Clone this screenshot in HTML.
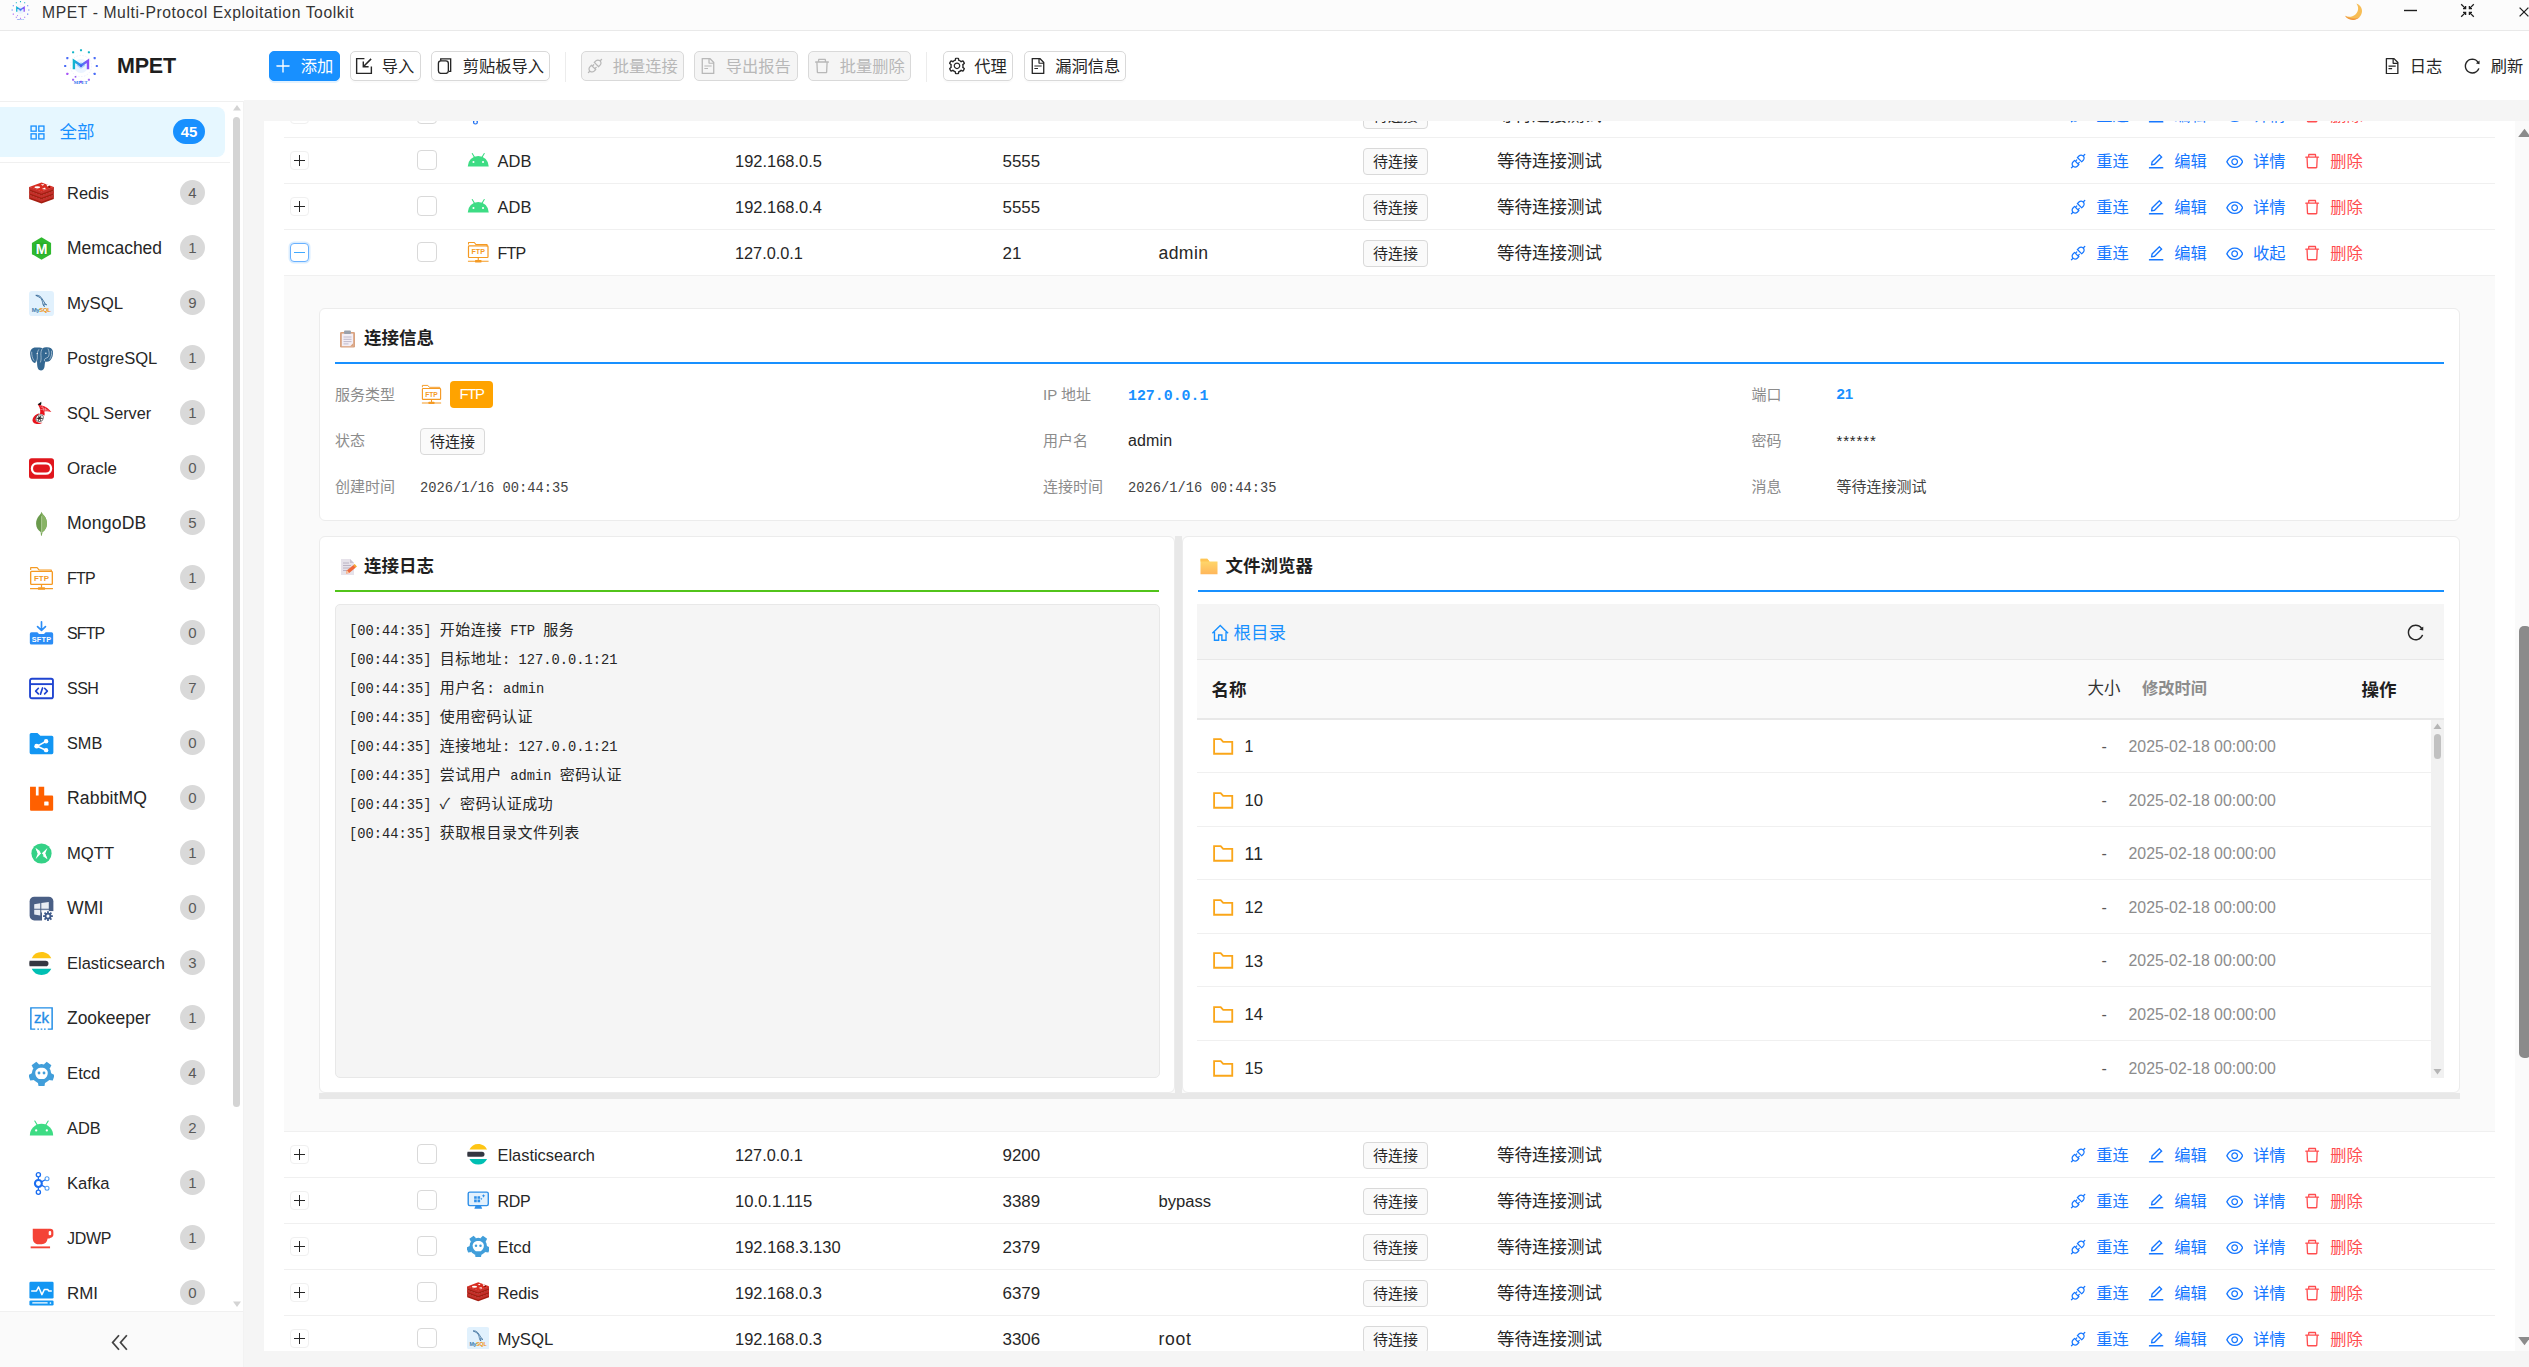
<!DOCTYPE html><html lang="zh-CN"><head><meta charset="utf-8"><title>MPET - Multi-Protocol Exploitation Toolkit</title><style>*{box-sizing:border-box;margin:0;padding:0}
html,body{width:2529px;height:1367px;overflow:hidden}
body{position:relative;background:#f5f5f5;color:#262626;font-family:"Liberation Sans","Noto Sans CJK SC",sans-serif;font-size:17px;line-height:1}
svg{display:block;flex:none}
.abs{position:absolute}
/* title bar */
.titlebar{position:absolute;left:0;top:0;width:2529px;height:31px;background:#fcfcfc;border-bottom:1px solid #e9e9e9}
.titlebar .ttl{position:absolute;left:42px;top:.5px;height:23px;line-height:23px;font-size:16px;color:#333;white-space:nowrap;letter-spacing:.1px}
.wc{position:absolute;top:0}
/* header */
.header{position:absolute;left:0;top:31px;width:2529px;height:70px;background:#fff}
.hstrip{position:absolute;left:244px;top:100px;width:2285px;height:1px;background:#f5f5f5}
.brand{position:absolute;left:117px;top:20px;height:30px;line-height:30px;font-size:21.5px;font-weight:700;color:#1f1f1f;letter-spacing:-.2px}
.btn{position:absolute;top:20px;height:30px;border:1px solid #d9d9d9;border-radius:5px;background:#fff;font-size:16.25px;color:#262626;white-space:nowrap;box-shadow:0 2px 0 rgba(0,0,0,.016)}
.btn .bi{position:absolute;left:13px;top:14px;transform:translate(-50%,-50%)}
.btn .bt{position:absolute;left:30.800px;top:0;height:28px;line-height:28px}
.btn.primary{background:#1890ff;border-color:#1890ff;color:#fff;box-shadow:0 2px 0 rgba(24,144,255,.12)}
.btn.dis{background:#f5f5f5;color:#b8b8b8;border-color:#d9d9d9;box-shadow:none}
.vdiv{position:absolute;top:21px;width:1px;height:30px;background:#ececec}
.hlink{position:absolute;top:20px;height:30px;display:flex;align-items:center;font-size:16.25px;color:#262626;white-space:nowrap}
/* sidebar */
.sider{position:absolute;left:0;top:101px;width:244px;height:1266px;background:#fff;border-right:1px solid #f2f2f2}
.sider:before{content:"";position:absolute;left:0;top:0;width:243px;height:1px;background:#f0f0f0}
.mitem{position:absolute;left:0;width:225px;height:50px}
.mitem .ico{position:absolute;left:29px;top:12.500px;width:25px;height:25px}
.mitem .lbl{position:absolute;left:67px;top:0;height:51px;line-height:51px;font-size:17.25px;color:#262626;white-space:nowrap}
.mitem .cnt{position:absolute;right:20px;top:12.400px;width:25px;height:25px;border-radius:13px;background:#d9d9d9;color:#595959;font-size:15px;line-height:25px;text-align:center}
.mitem.active{background:#e6f7ff;border-radius:0 8px 8px 0}
.mitem.active .lbl{color:#1890ff;left:59.500px;font-size:17.5px}
.mitem.active .cnt{width:32px;background:#1890ff;color:#fff;font-weight:700;font-size:15px}
.msep{position:absolute;left:0;top:61px;width:230px;height:1px;background:#f0f0f0}
.sb-track{position:absolute}
.collapse{position:absolute;left:0;bottom:0;width:243px;height:56px;background:#fafafa;border-top:1px solid #f0f0f0}
/* main */
.card{position:absolute;left:264px;top:121px;width:2251px;height:1230px;background:#fff;overflow:hidden}
.vscroll{position:absolute;left:2515px;top:121px;width:14px;height:1230px;background:#fafafa}
.row{position:absolute;left:20px;width:2211px;height:46px;border-bottom:1px solid #f0f0f0}
.row > *{position:absolute}
.exp{left:6px;top:13px;width:19px;height:19px;border:1px solid #f0f0f0;border-radius:4px;background:#fff}
.exp:before{content:"";position:absolute;left:3px;top:8px;width:11px;height:1px;background:#262626}
.exp:after{content:"";position:absolute;left:8px;top:3px;width:1px;height:11px;background:#262626}
.exp.open{border-color:#69b1ff;box-shadow:0 0 0 1.5px rgba(24,144,255,.16)}
.exp.open:before{background:#40a9ff}
.exp.open:after{display:none}
.chk{left:133px;top:12px;width:20px;height:20px;border:1px solid #d9d9d9;border-radius:4px;background:#fff}
.sico{left:182.500px;top:10.500px;width:22.500px;height:22.500px}
.cell{top:.6px;height:45px;line-height:45px;white-space:nowrap;font-size:17px;color:#262626}
.cell.cj{font-size:17.5px}
.tag{border:1px solid #d9d9d9;background:#fafafa;border-radius:4px;font-size:15px;color:#262626;text-align:center;white-space:nowrap}
.row .tag{left:1079px;top:10px;width:65px;height:27px;line-height:25px}
.act{top:.8px;height:45px;display:flex;align-items:center;font-size:16.25px;color:#1677ff;white-space:nowrap}
.act.del{color:#ff4d4f}
/* expanded */
.expand{position:absolute;left:20px;top:155px;width:2211px;height:856px;background:#fafafa;border-bottom:1px solid #f0f0f0}
.panel{position:absolute;background:#fff;border:1px solid #ececec;border-radius:6px}
.ptitle{position:absolute;left:15px;top:0;height:52px;display:flex;align-items:center;font-size:17.5px;font-weight:700;color:#1f1f1f;white-space:nowrap}
.pline{position:absolute;left:15px;right:15px;height:2.5px}
.il{position:absolute;font-size:15px;color:#8c8c8c;height:20px;line-height:20px;white-space:nowrap}
.iv{position:absolute;height:20px;line-height:20px;white-space:nowrap;font-size:15px;color:#262626}
.mono{font-family:"Liberation Mono","Noto Sans CJK SC",monospace}
.logbox{position:absolute;left:15px;top:67px;width:825px;height:474px;background:#f5f5f5;border:1px solid #e8e8e8;border-radius:5px}
.ll{position:absolute;left:13px;height:20px;line-height:20px;font-size:13.75px;color:#262626;white-space:pre}
.ll b{font-weight:400;font-size:15px;letter-spacing:.55px}
.fbar{position:absolute;left:14px;top:67px;width:1247px;height:56px;background:#f5f5f5;border-bottom:1px solid #e8e8e8}
.fhead{position:absolute;left:14px;top:123px;width:1247px;height:60px;background:#fafafa;border-bottom:2px solid #e8e8e8}
.fhead span{position:absolute;top:1px;height:58px;line-height:58px;white-space:nowrap}
.frow{position:absolute;left:14px;width:1234px;height:54px;border-bottom:1px solid #f0f0f0}
.frow span{position:absolute;height:20px;line-height:20px;white-space:nowrap}
</style></head><body>
<div class="titlebar">
<div class="abs" style="left:10.500px;top:1px"><svg width="19" height="20.06" viewBox="0 0 36 38"><defs><linearGradient id="lg19" x1="0" y1="0" x2="1" y2="0"><stop offset="0" stop-color="#10b6cf"/><stop offset=".5" stop-color="#3b82f6"/><stop offset="1" stop-color="#8b4cf6"/></linearGradient></defs><rect x="16.95" y="0.15" width="2.100" height="2.100" rx=".4" fill="#13b5c8"/><rect x="24.85" y="2.27" width="2.100" height="2.100" rx=".4" fill="#13b5c8"/><rect x="30.63" y="8.05" width="2.100" height="2.100" rx=".4" fill="#4a6cf7"/><rect x="32.75" y="15.95" width="2.100" height="2.100" rx=".4" fill="#4a6cf7"/><rect x="30.63" y="23.85" width="2.100" height="2.100" rx=".4" fill="#4a6cf7"/><rect x="24.85" y="29.63" width="2.100" height="2.100" rx=".4" fill="#a06bf5"/><rect x="16.95" y="31.75" width="2.100" height="2.100" rx=".4" fill="#a855f7"/><rect x="9.05" y="29.63" width="2.100" height="2.100" rx=".4" fill="#a06bf5"/><rect x="3.27" y="23.85" width="2.100" height="2.100" rx=".4" fill="#a855f7"/><rect x="1.15" y="15.95" width="2.100" height="2.100" rx=".4" fill="#4a6cf7"/><rect x="3.27" y="8.05" width="2.100" height="2.100" rx=".4" fill="#4a6cf7"/><rect x="9.05" y="2.27" width="2.100" height="2.100" rx=".4" fill="#13b5c8"/><circle cx="18" cy="17" r="10.600" fill="none" stroke="#dfe6fb" stroke-width=".6" stroke-dasharray="1.500 1.500"/><circle cx="18" cy="17" r="7" fill="#e6f0ff" opacity=".8"/><path d="M13.500 16.500L18 13.200l4.500 3.300L18 19.800z" fill="#8ec5f5" opacity=".7"/><path d="M10.900 20.200V11.700L18 16.600l7-4.900v8.500" fill="none" stroke="url(#lg19)" stroke-width="2.400" stroke-linejoin="miter"/><circle cx="18" cy="16.800" r="1.200" fill="#4a5cf0"/><rect x="11.700" y="27" width="1.600" height="1.600" fill="#9a5cf0"/><text x="17.700" y="35.100" text-anchor="middle" font-size="4.600" font-weight="700" fill="#2f6fed" font-family="Liberation Serif, serif" letter-spacing=".2">MPET</text></svg></div>
<div class="ttl" style="font-size:15.70px;letter-spacing:0.60px;">MPET - Multi-Protocol Exploitation Toolkit</div>
<svg class="wc" style="left:2343px;top:3px" width="20" height="18" viewBox="0 0 20 18"><path d="M13.400 .6c2.600 3.600 2.300 8-1 10.800-2.900 2.500-6.900 3-10.400 1.400 2 3.200 6 4.800 9.900 3.900 4.700-1.100 7.700-5.300 7-9.900-.4-2.700-2.500-5.100-5.500-6.200z" fill="#f7bd55"/><path d="M2 12.800c2 3.200 6 4.800 9.900 3.900 1.900-.4 3.500-1.400 4.700-2.700-4 2.300-9.700 2.100-14.600-1.200z" fill="#ee8a3a" opacity=".75"/></svg>
<svg class="wc" style="left:2403px;top:9px" width="15" height="3" viewBox="0 0 15 3"><path d="M1 1.500h13" stroke="#1f1f1f" stroke-width="1.400"/></svg>
<svg class="wc" style="left:2460px;top:3px" width="15" height="15" viewBox="0 0 15 15" fill="none" stroke="#1f1f1f" stroke-width="1.300"><path d="M1.200 1.200l4.400 4.400M3 5.600h2.600V3M13.800 1.200L9.400 5.600M12 5.600H9.400V3M1.200 13.800l4.400-4.400M3 9.400h2.600V12M13.800 13.800L9.400 9.400M12 9.400H9.400V12"/></svg>
<svg class="wc" style="left:2519px;top:7px" width="10" height="10" viewBox="0 0 10 10"><path d="M.6 .6l8.800 8.800M.6 9.400L9.400 .6" stroke="#1f1f1f" stroke-width="1.300"/></svg>
</div>
<div class="header">
<div class="abs" style="left:63px;top:18px"><svg width="36" height="38.00" viewBox="0 0 36 38"><defs><linearGradient id="lg36" x1="0" y1="0" x2="1" y2="0"><stop offset="0" stop-color="#10b6cf"/><stop offset=".5" stop-color="#3b82f6"/><stop offset="1" stop-color="#8b4cf6"/></linearGradient></defs><rect x="16.95" y="0.15" width="2.100" height="2.100" rx=".4" fill="#13b5c8"/><rect x="24.85" y="2.27" width="2.100" height="2.100" rx=".4" fill="#13b5c8"/><rect x="30.63" y="8.05" width="2.100" height="2.100" rx=".4" fill="#4a6cf7"/><rect x="32.75" y="15.95" width="2.100" height="2.100" rx=".4" fill="#4a6cf7"/><rect x="30.63" y="23.85" width="2.100" height="2.100" rx=".4" fill="#4a6cf7"/><rect x="24.85" y="29.63" width="2.100" height="2.100" rx=".4" fill="#a06bf5"/><rect x="16.95" y="31.75" width="2.100" height="2.100" rx=".4" fill="#a855f7"/><rect x="9.05" y="29.63" width="2.100" height="2.100" rx=".4" fill="#a06bf5"/><rect x="3.27" y="23.85" width="2.100" height="2.100" rx=".4" fill="#a855f7"/><rect x="1.15" y="15.95" width="2.100" height="2.100" rx=".4" fill="#4a6cf7"/><rect x="3.27" y="8.05" width="2.100" height="2.100" rx=".4" fill="#4a6cf7"/><rect x="9.05" y="2.27" width="2.100" height="2.100" rx=".4" fill="#13b5c8"/><circle cx="18" cy="17" r="10.600" fill="none" stroke="#dfe6fb" stroke-width=".6" stroke-dasharray="1.500 1.500"/><circle cx="18" cy="17" r="7" fill="#e6f0ff" opacity=".8"/><path d="M13.500 16.500L18 13.200l4.500 3.300L18 19.800z" fill="#8ec5f5" opacity=".7"/><path d="M10.900 20.200V11.700L18 16.600l7-4.900v8.500" fill="none" stroke="url(#lg36)" stroke-width="2.400" stroke-linejoin="miter"/><circle cx="18" cy="16.800" r="1.200" fill="#4a5cf0"/><rect x="11.700" y="27" width="1.600" height="1.600" fill="#9a5cf0"/><text x="17.700" y="35.100" text-anchor="middle" font-size="4.600" font-weight="700" fill="#2f6fed" font-family="Liberation Serif, serif" letter-spacing=".2">MPET</text></svg></div>
<div class="brand">MPET</div>
<div class="btn primary" style="left:269px;width:71px"><span class="bi"><svg width="16.25" height="16.25" viewBox="64 64 896 896" fill="#fff"><path d="M482 152h60q8 0 8 8v704q0 8-8 8h-60q-8 0-8-8V160q0-8 8-8z"/><path d="M192 474h672q8 0 8 8v60q0 8-8 8H160q-8 0-8-8v-60q0-8 8-8z"/></svg></span><span class="bt">添加</span></div>
<div class="btn " style="left:350px;width:70.5px"><span class="bi"><svg width="16.8" height="16.8" viewBox="1.500 1.200 13.300 13.300" fill="none" stroke="#262626" stroke-width="1.15" stroke-linecap="butt" stroke-linejoin="miter"><path d="M8.500 2H2.300v11.700h11.700V8.200"/><path d="M13.800 2.200L7.600 8.400M7.600 4.200v4.200h4.200"/></svg></span><span class="bt">导入</span></div>
<div class="btn " style="left:431px;width:118.5px"><span class="bi"><svg width="16.2" height="16.2" viewBox="1.300 1 14 14" fill="none" stroke="#262626" stroke-width="1.15" stroke-linecap="butt" stroke-linejoin="miter"><path d="M4.600 3.400V1.800h8.600v10.800h-1.600"/><rect x="2.600" y="3.600" width="8.600" height="10.800" rx="2.200"/></svg></span><span class="bt">剪贴板导入</span></div>
<div class="vdiv" style="left:565px"></div>
<div class="btn dis" style="left:581px;width:102.5px"><span class="bi"><svg width="16.25" height="16.25" viewBox="64 64 896 896" fill="#b8b8b8"><path d="M917.7 148.800l-42.400-42.400c-1.600-1.600-3.600-2.300-5.700-2.300s-4.100.8-5.700 2.300l-76.100 76.100a199.270 199.270 0 00-112.100-34.300c-51.200 0-102.400 19.500-141.500 58.600L432.300 308.700a8.030 8.030 0 000 11.300L704 591.700c1.600 1.600 3.600 2.300 5.700 2.300 2 0 4.100-.8 5.700-2.300l101.900-101.900c68.900-69 77-175.700 24.300-253.500l76.100-76.100c3.100-3.200 3.100-8.300 0-11.400zM769.100 441.700l-59.400 59.400-186.800-186.800 59.400-59.400c24.900-24.900 58.100-38.700 93.400-38.700 35.300 0 68.400 13.700 93.400 38.700 24.900 24.900 38.700 58.100 38.700 93.400 0 35.300-13.800 68.400-38.700 93.400zm-190.200 105a8.030 8.030 0 00-11.300 0L501 613.300 410.700 523l66.700-66.700c3.100-3.100 3.100-8.200 0-11.300L441 408.600a8.030 8.030 0 00-11.300 0L363 475.300l-43-43a7.850 7.850 0 00-5.700-2.300c-2 0-4.100.8-5.700 2.300L206.800 534.200c-68.900 69-77 175.700-24.300 253.500l-76.100 76.100a8.030 8.030 0 000 11.300l42.400 42.400c1.600 1.600 3.600 2.300 5.700 2.300s4.100-.8 5.700-2.300l76.100-76.100c33.700 22.900 72.900 34.300 112.100 34.300 51.200 0 102.400-19.500 141.500-58.600l101.900-101.900c3.100-3.100 3.100-8.200 0-11.300l-43-43 66.700-66.700c3.100-3.100 3.100-8.200 0-11.300l-36.600-36.200zM441.700 769.100a131.320 131.320 0 01-93.400 38.700c-35.300 0-68.400-13.700-93.400-38.700a131.320 131.320 0 01-38.700-93.400c0-35.300 13.700-68.400 38.700-93.400l59.400-59.400 186.800 186.800-59.400 59.400z"/></svg></span><span class="bt">批量连接</span></div>
<div class="btn dis" style="left:694px;width:103.5px"><span class="bi"><svg width="16.25" height="16.25" viewBox="64 64 896 896" fill="#b8b8b8"><path d="M854.6 288.600L639.400 73.400c-6-6-14.100-9.400-22.600-9.400H192c-17.700 0-32 14.300-32 32v832c0 17.700 14.300 32 32 32h640c17.700 0 32-14.300 32-32V311.300c0-8.500-3.400-16.700-9.400-22.700zM790.200 326H602V137.800L790.200 326zm1.800 562H232V136h302v216a42 42 0 0042 42h216v494zM504 618H320c-4.400 0-8 3.600-8 8v48c0 4.400 3.600 8 8 8h184c4.400 0 8-3.600 8-8v-48c0-4.400-3.600-8-8-8zM312 490v48c0 4.400 3.600 8 8 8h384c4.400 0 8-3.600 8-8v-48c0-4.400-3.600-8-8-8H320c-4.400 0-8 3.600-8 8z"/></svg></span><span class="bt">导出报告</span></div>
<div class="btn dis" style="left:808px;width:102.5px"><span class="bi"><svg width="16.25" height="16.25" viewBox="64 64 896 896" fill="#b8b8b8"><path d="M360 184h-8c4.400 0 8-3.600 8-8v8h304v-8c0 4.400 3.600 8 8 8h-8v72h72v-80c0-35.300-28.700-64-64-64H352c-35.300 0-64 28.700-64 64v80h72v-72zm504 72H160c-17.700 0-32 14.300-32 32v32c0 4.400 3.600 8 8 8h60.400l24.700 523c1.600 34.100 29.800 61 63.900 61h454c34.200 0 62.300-26.800 63.900-61l24.700-523H888c4.400 0 8-3.600 8-8v-32c0-17.700-14.300-32-32-32zM731.3 840H292.700l-24.200-512h487l-24.200 512z"/></svg></span><span class="bt">批量删除</span></div>
<div class="vdiv" style="left:926px"></div>
<div class="btn " style="left:942.5px;width:70px"><span class="bi"><svg width="17" height="17" viewBox="64 64 896 896" fill="#262626"><path d="M924.800 625.700l-65.500-56c3.100-19 4.700-38.400 4.700-57.800s-1.600-38.800-4.700-57.800l65.500-56a32.030 32.030 0 009.300-35.200l-.9-2.600a442.090 442.090 0 00-79.700-137.900l-1.800-2.100a32.120 32.120 0 00-35.100-9.500l-81.300 28.900c-30-24.600-63.500-44-99.700-57.600l-15.700-85a32.050 32.050 0 00-25.800-25.700l-2.700-.5c-52.100-9.400-106.900-9.400-159 0l-2.700.5a32.050 32.050 0 00-25.800 25.700l-15.800 85.400a351.860 351.860 0 00-99 57.400l-81.900-29.100a32 32 0 00-35.100 9.500l-1.800 2.100a446.020 446.020 0 00-79.700 137.900l-.9 2.600c-4.500 12.500-.8 26.500 9.300 35.200l66.300 56.600c-3.100 18.800-4.600 38-4.600 57.100 0 19.200 1.500 38.400 4.600 57.100L99 625.500a32.030 32.030 0 00-9.300 35.200l.9 2.600c18.100 50.400 44.900 96.900 79.700 137.900l1.800 2.100a32.120 32.120 0 0035.100 9.500l81.900-29.100c29.800 24.500 63.100 43.900 99 57.400l15.800 85.400a32.050 32.050 0 0025.800 25.700l2.700.5a449.400 449.400 0 00159 0l2.700-.5a32.050 32.050 0 0025.800-25.700l15.700-85a350 350 0 0099.700-57.600l81.300 28.900a32 32 0 0035.100-9.500l1.800-2.100c34.800-41.100 61.600-87.500 79.700-137.900l.9-2.600c4.500-12.300.8-26.300-9.300-35zM788.300 465.900c2.500 15.100 3.800 30.600 3.800 46.100s-1.300 31-3.800 46.100l-6.600 40.100 74.700 63.900a370.030 370.030 0 01-42.600 73.600L721 702.800l-31.400 25.800c-23.900 19.600-50.500 35-79.300 45.800l-38.100 14.300-17.900 97a377.500 377.500 0 01-85 0l-17.900-97.200-37.800-14.500c-28.500-10.800-55-26.200-78.700-45.700l-31.400-25.900-93.400 33.200c-17-22.900-31.200-47.600-42.600-73.600l75.500-64.500-6.500-40c-2.400-14.900-3.700-30.300-3.700-45.500 0-15.300 1.200-30.600 3.700-45.500l6.500-40-75.500-64.500c11.300-26.100 25.600-50.700 42.600-73.600l93.400 33.200 31.400-25.900c23.700-19.500 50.200-34.900 78.700-45.700l37.900-14.300 17.900-97.200c28.100-3.200 56.800-3.200 85 0l17.900 97 38.100 14.300c28.700 10.800 55.400 26.200 79.300 45.800l31.400 25.800 92.800-32.900c17 22.900 31.200 47.600 42.600 73.600L781.800 426l6.500 39.900zM512 326c-97.200 0-176 78.800-176 176s78.800 176 176 176 176-78.800 176-176-78.800-176-176-176zm79.200 255.200A111.600 111.600 0 01512 614c-29.900 0-58-11.700-79.200-32.800A111.600 111.600 0 01400 502c0-29.900 11.700-58 32.800-79.200C454 401.600 482.100 390 512 390c29.900 0 58 11.600 79.200 32.800A111.600 111.600 0 01624 502c0 29.900-11.700 58-32.800 79.200z"/></svg></span><span class="bt">代理</span></div>
<div class="btn " style="left:1023.5px;width:102px"><span class="bi"><svg width="16.25" height="16.25" viewBox="64 64 896 896" fill="#262626"><path d="M854.6 288.600L639.400 73.400c-6-6-14.100-9.400-22.600-9.400H192c-17.700 0-32 14.300-32 32v832c0 17.700 14.300 32 32 32h640c17.700 0 32-14.300 32-32V311.300c0-8.500-3.400-16.700-9.400-22.700zM790.200 326H602V137.800L790.200 326zm1.800 562H232V136h302v216a42 42 0 0042 42h216v494zM504 618H320c-4.400 0-8 3.600-8 8v48c0 4.400 3.600 8 8 8h184c4.400 0 8-3.600 8-8v-48c0-4.400-3.600-8-8-8zM312 490v48c0 4.400 3.600 8 8 8h384c4.400 0 8-3.600 8-8v-48c0-4.400-3.600-8-8-8H320c-4.400 0-8 3.600-8 8z"/></svg></span><span class="bt">漏洞信息</span></div>
<div class="hlink" style="left:2384px"><svg width="16.25" height="16.25" viewBox="64 64 896 896" fill="#262626"><path d="M854.6 288.600L639.400 73.400c-6-6-14.100-9.400-22.600-9.400H192c-17.700 0-32 14.300-32 32v832c0 17.700 14.300 32 32 32h640c17.700 0 32-14.300 32-32V311.300c0-8.500-3.400-16.700-9.400-22.700zM790.200 326H602V137.800L790.200 326zm1.800 562H232V136h302v216a42 42 0 0042 42h216v494zM504 618H320c-4.400 0-8 3.600-8 8v48c0 4.400 3.600 8 8 8h184c4.400 0 8-3.600 8-8v-48c0-4.400-3.600-8-8-8zM312 490v48c0 4.400 3.600 8 8 8h384c4.400 0 8-3.600 8-8v-48c0-4.400-3.600-8-8-8H320c-4.400 0-8 3.600-8 8z"/></svg><span style="margin-left:9.500px">日志</span></div>
<div class="hlink" style="left:2464px"><svg width="16.25" height="16.25" viewBox="64 64 896 896" fill="#262626"><path d="M909.1 209.3l-56.4 44.1C775.8 155.1 656.2 92 521.9 92 290 92 102.3 279.5 102 511.5 101.7 743.7 289.8 932 521.9 932c181.3 0 335.8-115 394.6-276.1 1.500-4.200-.7-8.900-4.900-10.300l-56.700-19.500a8 8 0 00-10.100 4.800c-1.800 5-3.800 10-5.900 14.900-17.300 41-42.100 77.800-73.700 109.400A344.770 344.770 0 01655.9 829c-42.300 17.900-87.400 27-133.800 27-46.500 0-91.500-9.100-133.800-27A341.500 341.500 0 01279 755.200a342.160 342.160 0 01-73.700-109.400c-17.900-42.400-27-87.400-27-133.900s9.100-91.500 27-133.900c17.300-41 42.100-77.800 73.700-109.400 31.600-31.600 68.400-56.400 109.300-73.800 42.300-17.900 87.400-27 133.800-27 46.500 0 91.500 9.100 133.800 27a341.500 341.500 0 01109.300 73.800c9.900 9.900 19.200 20.400 27.800 31.400l-60.200 47a8 8 0 003 14.100l175.600 43c5 1.200 9.900-2.600 9.900-7.700l.8-180.900c-.1-6.600-7.800-10.300-13-6.200z"/></svg><span style="margin-left:10.500px">刷新</span></div>
</div>
<div class="hstrip"></div>
<div class="sider">
<div class="mitem active" style="top:6px"><div class="ico" style="left:30px;top:18px"><svg width="15" height="15" viewBox="0 0 17 17" ><rect x="1.2" y="1.2" width="5.800" height="5.800" fill="none" stroke="#1890ff" stroke-width="1.500"/><rect x="1.2" y="10" width="5.800" height="5.800" fill="none" stroke="#1890ff" stroke-width="1.500"/><rect x="10" y="1.2" width="5.800" height="5.800" fill="none" stroke="#1890ff" stroke-width="1.500"/><rect x="10" y="10" width="5.800" height="5.800" fill="none" stroke="#1890ff" stroke-width="1.500"/></svg></div><div class="lbl">全部</div><div class="cnt">45</div></div>
<div class="msep"></div>
<div class="mitem" style="top:67px"><div class="ico"><svg width="25" height="25" viewBox="0 0 25 25" ><path d="M.2 14L12.500 18.5L24.800 14v4L12.500 22.5L.2 18z" fill="#a41e11"/><path d="M.2 14L12.500 18.5L24.800 14v2.300L12.500 20.8L.2 16.3z" fill="#c6302b"/><path d="M.2 10L12.500 14.5L24.800 10v4L12.500 18.5L.2 14z" fill="#a41e11"/><path d="M.2 10L12.500 14.5L24.800 10v2.300L12.500 16.8L.2 12.3z" fill="#c6302b"/><path d="M.2 6L12.500 10.5L24.800 6v4L12.500 14.5L.2 10z" fill="#a41e11"/><path d="M.2 6L12.500 10.5L24.800 6v2.300L12.500 12.8L.2 8.3z" fill="#c6302b"/><path d="M12.500 1.500L24.800 6L12.500 10.500L.2 6z" fill="#d82c20"/><ellipse cx="8.300" cy="6.300" rx="2.900" ry="1.100" fill="#fff"/><path d="M11.800 3.600l3.400-.6-1.300 1.700zM12.800 7.900l3.300-1.300.6 2zM17.300 3.300l3.700 1.400-2.600 1.100z" fill="#fff"/><path d="M18.300 5.700l2.600-1 .1 2.200z" fill="#7a0c00"/></svg></div><div class="lbl" style="font-size:16.47px;letter-spacing:0.00px;">Redis</div><div class="cnt">4</div></div>
<div class="mitem" style="top:122px"><div class="ico"><svg width="25" height="25" viewBox="0 0 24 24" ><path d="M12 1.200l9.200 5.400v10.800L12 22.800l-9.200-5.400V6.600z" fill="#2fb92f"/><rect x="5.800" y="6.400" width="12.400" height="11.600" rx="3" fill="#27a527" opacity=".6"/><text x="12" y="17" text-anchor="middle" font-size="13.500" font-weight="700" fill="#fff" font-family="Liberation Sans, sans-serif">M</text></svg></div><div class="lbl" style="font-size:17.44px;letter-spacing:0.00px;">Memcached</div><div class="cnt">1</div></div>
<div class="mitem" style="top:177px"><div class="ico"><svg width="25" height="25" viewBox="0 0 24 24" ><rect x="0" y="0" width="24" height="24" rx="3" fill="#e1f1fd"/><path d="M6.5 4.200c1.800-.4 3.600.3 5 1.800 1.600 1.700 2.400 3.900 3.600 5.600.5.700 1.300 1.100 1.900 1.700-1-.1-1.900-.5-2.600-1.200-.2 1-.1 2 .4 2.900-1.100-.9-1.500-2.300-1.700-3.700-.3-1.800-.9-3.700-2.400-4.900-1.100-.9-2.700-1.300-4.200-2.200z" fill="none" stroke="#2a5f8f" stroke-width=".8" stroke-linejoin="round"/><text x="2.600" y="20.6" font-size="5.700" font-weight="700" fill="#3e7cad" font-family="Liberation Sans, sans-serif" letter-spacing="-.3">My<tspan fill="#f29111">SQL</tspan></text></svg></div><div class="lbl" style="font-size:16.83px;letter-spacing:0.00px;">MySQL</div><div class="cnt">9</div></div>
<div class="mitem" style="top:232px"><div class="ico"><svg width="25" height="25" viewBox="0 0 24 24" ><path d="M6.800 1.500C3.200 1.300.8 3.800 1.100 7.900c.2 3.300 1.500 6.700 3.300 8 1 .7 2 .2 2.600-.7l.7-1c.1 2.600 0 5.700 1 7.700.8 1.700 3.600 2 5 .7 1.100-1 1.200-2.800 1.400-4.600.1-1.100.2-2.100.5-3 1.500.5 3.300.2 4.500-.8 2.300-2 3.300-5.900 2.900-9.100C22.600 2.500 20 .9 16.400 1.200c-1.300.1-2.400.4-3.400.9C11.200 1.500 9 1.600 6.800 1.500z" fill="#336791"/><path d="M12.900 2.300c-1.300 1.800-1.700 4.400-1.400 7 .2 2.300.2 4.400-.6 6.500M6.700 15.300c1.100-1.600 1.500-3.500 1.300-5.600-.3-2.500.2-4.600 1.500-6.500M15.700 14.900c-1-.5-1.300-1.800-.4-2.600 1.100-1 2.800-.6 3.600-2.600.7-1.800.7-4.500-.7-7.200M2.600 5.500c-.2 3.200.7 6.600 2.300 8.600M21.700 4.600c.4 3-.4 6.400-2.100 8.400" fill="none" stroke="#fff" stroke-width=".65" opacity=".75"/><circle cx="7.900" cy="7.300" r=".7" fill="#fff"/><circle cx="16.200" cy="7" r=".7" fill="#fff"/></svg></div><div class="lbl" style="font-size:16.58px;letter-spacing:0.00px;">PostgreSQL</div><div class="cnt">1</div></div>
<div class="mitem" style="top:287px"><div class="ico"><svg width="25" height="25" viewBox="0 0 24 24" ><path d="M8.300 3.400c.8-.9 2.200-1.500 3.400-2.600.2 1 .3 1.800-.1 2.700-1 .6-2.300.5-3.300-.1z" fill="#111"/><path d="M8.600 3.600c4.700.3 9.600 2.800 12.900 6.900-2.400-.8-4.600-.9-6.900-.3.600 1.300.6 2.600.1 3.900-1.100-1.200-2.500-1.800-4.100-1.700.6-3 .1-6.200-2-8.800z" fill="#e8141c"/><path d="M11 5.500l6.500 3.300M10.800 8l8.200 1M13 4.800l1.500 5.300M16 6.300l-.5 4.300" stroke="#fff" stroke-width=".45" opacity=".75"/><path d="M10.300 11.800c-3.300.6-6 2.800-6.800 5.400-.7 2.200.6 4.200 3.100 4.700 2.200.5 4.700 0 6.400-1.100-2.200.3-4.600 0-5.800-1.200-1.600-1.600-.8-4.500 1.800-6.500.5-.4 1-.8 1.300-1.300z" fill="#e8141c"/><path d="M7.600 14.300c1.700-1.300 4.400-1.500 5.800-.4.700 1.700.3 4-1.200 5.400-1.800.8-4 .5-5-.6-.8-1.500-.7-3.200.4-4.400z" fill="#fff" stroke="#222" stroke-width=".6"/><path d="M9.200 14.200l2.200 5M11.500 13.900l-2.800 5.300M7.300 16.600l5.900.3M9 15.500c1 .5 2 .5 3 0" stroke="#222" stroke-width=".8" fill="none"/><circle cx="9.300" cy="16.800" r="1" fill="#222"/></svg></div><div class="lbl" style="font-size:16.23px;letter-spacing:0.00px;">SQL Server</div><div class="cnt">1</div></div>
<div class="mitem" style="top:342px"><div class="ico"><svg width="25" height="25" viewBox="0 0 24 24" ><rect x="0" y="2.200" width="24" height="19.6" rx="2.600" fill="#e0161d"/><rect x="2.800" y="7" width="18.4" height="10" rx="5" fill="none" stroke="#fff" stroke-width="2.200"/></svg></div><div class="lbl" style="font-size:16.98px;letter-spacing:-0.00px;">Oracle</div><div class="cnt">0</div></div>
<div class="mitem" style="top:397px"><div class="ico"><svg width="25" height="25" viewBox="0 0 24 24" ><path d="M12 .6c.5 1.600 1.600 2.600 2.800 4.200 1.700 2.300 2.600 4.800 2.400 7.800-.2 3.600-2.100 6.300-4.400 7.600l-.4 3.200h-.9l-.3-3.200c-2.500-1.500-4.300-4.300-4.400-7.900-.1-3 1-5.500 2.800-7.700C10.600 3.200 11.600 2.200 12 .6z" fill="#6a9a4c"/><path d="M12 .6c.5 1.600 1.600 2.600 2.800 4.200 1.700 2.300 2.600 4.800 2.400 7.800-.2 3.600-2.100 6.300-4.400 7.600l-.4 3.200h-.5z" fill="#88b365"/><path d="M12.100 5v16" stroke="#c8dcb5" stroke-width=".6"/></svg></div><div class="lbl" style="font-size:17.60px;letter-spacing:0.18px;">MongoDB</div><div class="cnt">5</div></div>
<div class="mitem" style="top:452px"><div class="ico"><svg width="25" height="25" viewBox="0 0 24 24" ><path d="M1.600 3.800V1.600h6.200l1.800 2.200h11.800v2" fill="none" stroke="#f59a23" stroke-width="1.100" stroke-linejoin="round"/><rect x="1.600" y="5.200" width="20.8" height="12.400" rx=".8" fill="none" stroke="#f59a23" stroke-width="1.300"/><text x="12" y="14.300" text-anchor="middle" font-size="7.600" font-weight="700" fill="#f59a23" font-family="Liberation Sans, sans-serif">FTP</text><path d="M12 17.600v3.200M1 21.600h22" stroke="#f59a23" stroke-width="1.200"/><rect x="8.600" y="20.300" width="6.800" height="2.600" rx=".6" fill="#f59a23"/></svg></div><div class="lbl" style="font-size:16.00px;letter-spacing:-0.74px;">FTP</div><div class="cnt">1</div></div>
<div class="mitem" style="top:507px"><div class="ico"><svg width="25" height="25" viewBox="0 0 24 24" ><path d="M12 .8v7.600M8.200 5.400L12 9l3.800-3.600" fill="none" stroke="#2b8df6" stroke-width="1.600" stroke-linecap="round" stroke-linejoin="round"/><path d="M.8 12.500q0-1.600 1.600-1.600h5.600l1.600 1.600h4.800l1.600-1.600h5.600q1.600 0 1.600 1.600v8.500q0 1.600-1.600 1.600H2.400q-1.600 0-1.600-1.600z" fill="#2b8df6"/><text x="12" y="20" text-anchor="middle" font-size="7" font-weight="700" fill="#fff" font-family="Liberation Sans, sans-serif" letter-spacing=".2">SFTP</text></svg></div><div class="lbl" style="font-size:16.00px;letter-spacing:-0.87px;">SFTP</div><div class="cnt">0</div></div>
<div class="mitem" style="top:562px"><div class="ico"><svg width="25" height="25" viewBox="0 0 24 24" ><rect x="1" y="2.600" width="22" height="18.800" rx="1.800" fill="none" stroke="#1f44d1" stroke-width="1.800"/><path d="M1 7.800h22" stroke="#1f44d1" stroke-width="1.800"/><path d="M9 11.800l-2.600 2.700L9 17.200M15 11.800l2.600 2.700L15 17.200M13 11.500l-2 6" fill="none" stroke="#1f44d1" stroke-width="1.600" stroke-linecap="round" stroke-linejoin="round"/></svg></div><div class="lbl" style="font-size:16.00px;letter-spacing:-0.53px;">SSH</div><div class="cnt">7</div></div>
<div class="mitem" style="top:617px"><div class="ico"><svg width="25" height="25" viewBox="0 0 24 24" ><path d="M.6 3.300q0-1.500 1.500-1.500h6l2.800 2.800h11q1.500 0 1.500 1.500v14.600q0 1.500-1.500 1.500H2.100q-1.500 0-1.500-1.500z" fill="#1296f3"/><path d="M7.800 14.600l8-4.400M7.800 14.600l8 3.600" stroke="#fff" stroke-width="1.500"/><circle cx="7.400" cy="14.600" r="2.300" fill="#fff"/><circle cx="16.400" cy="9.800" r="2.100" fill="#fff"/><circle cx="16.400" cy="18.400" r="2.100" fill="#fff"/></svg></div><div class="lbl" style="font-size:16.29px;letter-spacing:0.00px;">SMB</div><div class="cnt">0</div></div>
<div class="mitem" style="top:672px"><div class="ico"><svg width="25" height="25" viewBox="0 0 24 24" ><path d="M1 .8h5.600v8.400h2.600V.8h5.400v8.400h7.600q1 0 1 1v12.600q0 1-1 1H2q-1 0-1-1z" fill="#ff6000"/><rect x="14.600" y="14.800" width="4.200" height="4" rx=".5" fill="#fff"/></svg></div><div class="lbl" style="font-size:17.60px;letter-spacing:0.12px;">RabbitMQ</div><div class="cnt">0</div></div>
<div class="mitem" style="top:727px"><div class="ico"><svg width="25" height="25" viewBox="0 0 24 24" ><circle cx="12" cy="12" r="9.700" fill="#34d186"/><path d="M6.300 6.600l5.400 5.200-5.400 5.800 2.100-5.600zM17.700 6.600l-5.400 5.200 5.400 5.800-2.100-5.600z" fill="#fff"/><path d="M6.300 6.600l4.600 3.200-2.500 2.200zM17.700 17.600l-4.600-3.200 2.500-2.200z" fill="#fff" opacity=".9"/></svg></div><div class="lbl" style="font-size:16.63px;letter-spacing:0.00px;">MQTT</div><div class="cnt">1</div></div>
<div class="mitem" style="top:782px"><div class="ico"><svg width="25" height="25" viewBox="0 0 24 24" ><rect x=".6" y=".6" width="22.800" height="22.800" rx="4.500" fill="#4a5f85"/><path d="M5 7.800l5.800-.9v5.300H5zM11.800 6.800l7.200-1.100v6.500h-7.200zM5 13.200h5.800v5.400L5 17.700zM11.800 13.200H19v2.600h-7.200z" fill="#e8ecf3"/><rect x="12.500" y="14.500" width="11.500" height="9.500" fill="#fff"/><g transform="translate(18.200 19.300)" fill="#3f5a8a"><circle r="3.300"/><g stroke="#3f5a8a" stroke-width="1.700"><path d="M0-4.700v9.400M-4.700 0h9.400M-3.300-3.300l6.600 6.600M-3.300 3.300l6.600-6.600"/></g><circle r="1.500" fill="#fff"/></g></svg></div><div class="lbl" style="font-size:17.60px;letter-spacing:0.18px;">WMI</div><div class="cnt">0</div></div>
<div class="mitem" style="top:837px"><div class="ico"><svg width="25" height="25" viewBox="0 0 24 24" ><path d="M2.600 7A10.400 10.400 0 0 1 12 1c4.200 0 7.800 2.400 9.400 6z" fill="#fec514"/><path d="M.6 9.300h15.400a2.700 2.700 0 0 1 0 5.400H.6a11 11 0 0 1 0-5.400z" fill="#343741"/><path d="M2.600 17h18.800A10.400 10.400 0 0 1 12 23a10.400 10.400 0 0 1-9.400-6z" fill="#00bfb3"/></svg></div><div class="lbl" style="font-size:16.45px;letter-spacing:0.00px;">Elasticsearch</div><div class="cnt">3</div></div>
<div class="mitem" style="top:892px"><div class="ico"><svg width="25" height="25" viewBox="0 0 24 24" ><path d="M6 22.200H1.800V1.800h20.400v20.400H18" fill="none" stroke="#1f8ce6" stroke-width="1.400"/><path d="M8 22.200h1.600M11.200 22.200h1.600M14.400 22.200h1.600" stroke="#1f8ce6" stroke-width="1.400"/><text x="12" y="16.800" text-anchor="middle" font-size="14.500" fill="#1f8ce6" stroke="#1f8ce6" stroke-width=".35" font-family="Liberation Sans, sans-serif">zk</text></svg></div><div class="lbl" style="font-size:17.47px;letter-spacing:0.00px;">Zookeeper</div><div class="cnt">1</div></div>
<div class="mitem" style="top:947px"><div class="ico"><svg width="25" height="25" viewBox="0 0 24 24" ><g transform="translate(12 12.300)" fill="#419eda"><path d="M-3.400 -8.500L-2.800 -12.300H2.800L3.400 -8.500z" transform="rotate(180)"/><path d="M-3.400 -8.500L-2.800 -12.300H2.800L3.400 -8.500z" transform="rotate(252)"/><path d="M-3.400 -8.500L-2.800 -12.300H2.800L3.400 -8.500z" transform="rotate(324)"/><path d="M-3.400 -8.500L-2.800 -12.300H2.800L3.400 -8.500z" transform="rotate(36)"/><path d="M-3.400 -8.500L-2.800 -12.300H2.800L3.400 -8.500z" transform="rotate(108)"/><circle r="9.400"/><path d="M0 -5.900c3.400 0 6 1.900 6 5 0 2.600-1.600 4.800-3.400 5.900h-5.200C-4.400 3.900-6 1.700-6-.9c0-3.100 2.600-5 6-5z" fill="#fff"/><circle cx="-2.400" cy="-.8" r="1.350"/><circle cx="2.400" cy="-.8" r="1.350"/></g></svg></div><div class="lbl" style="font-size:16.69px;letter-spacing:0.00px;">Etcd</div><div class="cnt">4</div></div>
<div class="mitem" style="top:1002px"><div class="ico"><svg width="25" height="25" viewBox="0 0 24 24" ><path d="M.8 18.600a11.200 11.200 0 0 1 22.400 0z" fill="#3ddc84"/><path d="M5.600 4.800l2.600 4.400M18.400 4.800l-2.600 4.400" stroke="#3ddc84" stroke-width="1.100" stroke-linecap="round"/><circle cx="6.900" cy="13.800" r="1.100" fill="#fff"/><circle cx="17.100" cy="13.800" r="1.100" fill="#fff"/></svg></div><div class="lbl" style="font-size:16.44px;letter-spacing:0.00px;">ADB</div><div class="cnt">2</div></div>
<div class="mitem" style="top:1057px"><div class="ico"><svg width="25" height="25" viewBox="0 0 24 24" ><path d="M9 5.800v2.600M9 15.600v2.600M12 10.400l3.600-2M12 13.600l3.600 2" stroke="#1a6df0" stroke-width="1.200"/><circle cx="9" cy="12" r="3.300" fill="none" stroke="#1a6df0" stroke-width="2"/><circle cx="9" cy="3.600" r="2" fill="none" stroke="#1a6df0" stroke-width="1.300"/><circle cx="9" cy="20.400" r="2" fill="none" stroke="#1a6df0" stroke-width="1.300"/><circle cx="17.300" cy="7.500" r="1.900" fill="none" stroke="#4b9bf5" stroke-width="1"/><circle cx="17.300" cy="16.500" r="1.900" fill="none" stroke="#4b9bf5" stroke-width="1"/></svg></div><div class="lbl" style="font-size:16.58px;letter-spacing:0.00px;">Kafka</div><div class="cnt">1</div></div>
<div class="mitem" style="top:1112px"><div class="ico"><svg width="25" height="25" viewBox="0 0 24 24" ><path d="M3.600 2.600h14.600v3h0a3 3 0 0 1 0 6.400h-.3c-.5 3.600-2.600 5.400-5.600 5.400H9c-3.300 0-5.400-2.300-5.400-6z" fill="#f44336"/><rect x="18.300" y="5" width="2.300" height="3.600" rx="1" fill="#fff"/><path d="M18.200 2.600h2.200a3 3 0 0 1 3 3v2.600a3 3 0 0 1-3 3h-2.200z" fill="#f44336"/><rect x="18.900" y="4.700" width="2.400" height="4.200" rx="1.100" fill="#fff"/><rect x="1.600" y="19.600" width="18.600" height="1.800" fill="#f44336"/></svg></div><div class="lbl" style="font-size:16.00px;letter-spacing:-0.28px;">JDWP</div><div class="cnt">1</div></div>
<div class="mitem" style="top:1167px"><div class="ico"><svg width="25" height="25" viewBox="0 0 24 24" ><rect x=".4" y=".6" width="23.200" height="16.200" rx="1.200" fill="#1296f3"/><path d="M2.600 9.500h4.600l2-3.800 3.200 7.400 2.400-5h3.200l.8 1.400h2.600" fill="none" stroke="#fff" stroke-width="1.400" stroke-linejoin="round" stroke-linecap="round"/><rect x=".4" y="18.600" width="23.200" height="5" rx="1.200" fill="#1296f3"/><rect x="3" y="20.500" width="15" height="1.200" rx=".6" fill="#fff"/><circle cx="20.600" cy="21.100" r=".8" fill="#fff"/></svg></div><div class="lbl" style="font-size:16.91px;letter-spacing:-0.00px;">RMI</div><div class="cnt">0</div></div>
<svg class="abs" style="left:232px;top:3px" width="10" height="8" viewBox="0 0 10 8"><path d="M5 1l4 5.500H1z" fill="#d4d4d4"/></svg>
<div class="abs" style="left:233px;top:16px;width:7px;height:990px;border-radius:3.500px;background:#d4d4d4"></div>
<svg class="abs" style="left:232px;top:1199px" width="10" height="8" viewBox="0 0 10 8"><path d="M5 7L1 1.500h8z" fill="#d4d4d4"/></svg>
<div class="collapse"><div class="abs" style="left:108.500px;top:19.500px"><svg width="21" height="21" viewBox="0 0 16 16" fill="none" stroke="#434343" stroke-width="1.35" stroke-linecap="butt" stroke-linejoin="miter"><path d="M7.600 2.500L2.800 8l4.800 5.500M13.600 2.500L8.800 8l4.800 5.500"/></svg></div></div>
</div>
<div class="card">
<div class="row" style="top:-29px">
<div class="exp"></div><div class="chk"></div>
<div class="sico"><svg width="22.5" height="22.5" viewBox="0 0 24 24" ><path d="M9 5.800v2.600M9 15.600v2.600M12 10.400l3.600-2M12 13.600l3.600 2" stroke="#1a6df0" stroke-width="1.200"/><circle cx="9" cy="12" r="3.300" fill="none" stroke="#1a6df0" stroke-width="2"/><circle cx="9" cy="3.600" r="2" fill="none" stroke="#1a6df0" stroke-width="1.300"/><circle cx="9" cy="20.400" r="2" fill="none" stroke="#1a6df0" stroke-width="1.300"/><circle cx="17.300" cy="7.500" r="1.900" fill="none" stroke="#4b9bf5" stroke-width="1"/><circle cx="17.300" cy="16.500" r="1.900" fill="none" stroke="#4b9bf5" stroke-width="1"/></svg></div>
<div class="cell" style="left:213.500px;font-size:16.58px;letter-spacing:0.00px;">Kafka</div><div class="cell" style="left:451px;font-size:16.44px;letter-spacing:0.00px;">192.168.0.6</div><div class="cell" style="left:718.500px;font-size:16.96px;letter-spacing:0.00px;">9092</div>
<div class="tag">待连接</div><div class="cell cj" style="left:1213px">等待连接测试</div>
<div class="act " style="left:1786px"><svg width="16.25" height="16.25" viewBox="64 64 896 896" fill="currentColor"><path d="M917.7 148.800l-42.400-42.400c-1.600-1.600-3.600-2.300-5.700-2.300s-4.100.8-5.700 2.300l-76.100 76.100a199.270 199.270 0 00-112.100-34.300c-51.200 0-102.400 19.500-141.500 58.600L432.300 308.700a8.030 8.030 0 000 11.300L704 591.700c1.600 1.600 3.600 2.300 5.700 2.300 2 0 4.100-.8 5.700-2.300l101.900-101.900c68.900-69 77-175.700 24.300-253.500l76.100-76.100c3.100-3.200 3.100-8.300 0-11.400zM769.100 441.700l-59.400 59.400-186.800-186.800 59.400-59.400c24.900-24.900 58.100-38.700 93.400-38.700 35.300 0 68.400 13.700 93.400 38.700 24.900 24.900 38.700 58.100 38.700 93.400 0 35.300-13.800 68.400-38.700 93.400zm-190.200 105a8.030 8.030 0 00-11.300 0L501 613.300 410.700 523l66.700-66.700c3.100-3.100 3.100-8.200 0-11.300L441 408.600a8.030 8.030 0 00-11.300 0L363 475.300l-43-43a7.850 7.850 0 00-5.700-2.300c-2 0-4.100.8-5.700 2.300L206.800 534.200c-68.900 69-77 175.700-24.300 253.500l-76.100 76.100a8.030 8.030 0 000 11.300l42.400 42.400c1.600 1.600 3.600 2.300 5.700 2.300s4.100-.8 5.700-2.300l76.100-76.100c33.700 22.900 72.900 34.300 112.100 34.300 51.200 0 102.400-19.500 141.500-58.600l101.900-101.900c3.100-3.100 3.100-8.200 0-11.300l-43-43 66.700-66.700c3.100-3.100 3.100-8.200 0-11.300l-36.600-36.200zM441.700 769.100a131.320 131.320 0 01-93.400 38.700c-35.300 0-68.400-13.700-93.400-38.700a131.320 131.320 0 01-38.700-93.400c0-35.300 13.700-68.400 38.700-93.400l59.400-59.400 186.800 186.800-59.400 59.400z"/></svg><span style="margin-left:10px">重连</span></div><div class="act " style="left:1864px"><svg width="16.25" height="16.25" viewBox="64 64 896 896" fill="currentColor"><path d="M257.7 752c2 0 4-.2 6-.5L431.900 722c2-.4 3.900-1.300 5.300-2.800l423.900-423.900a9.960 9.960 0 000-14.100L694.900 114.900c-1.900-1.900-4.400-2.900-7.100-2.900s-5.200 1-7.100 2.900L256.800 538.800c-1.500 1.500-2.400 3.300-2.800 5.300l-29.500 168.200a33.500 33.500 0 009.400 29.800c6.600 6.400 14.900 9.900 23.800 9.900zm67.400-174.400L687.800 215l73.300 73.300-362.700 362.600-88.900 15.700 15.600-89zM880 836H144c-17.700 0-32 14.300-32 32v36c0 4.400 3.600 8 8 8h784c4.400 0 8-3.600 8-8v-36c0-17.700-14.300-32-32-32z"/></svg><span style="margin-left:10px">编辑</span></div><div class="act " style="left:1941.5px"><svg width="17.5" height="17.5" viewBox="64 64 896 896" fill="currentColor"><path d="M942.2 486.2C847.4 286.500 704.100 186 512 186c-192.200 0-335.400 100.500-430.200 300.300a60.300 60.300 0 000 51.500C176.600 737.500 319.900 838 512 838c192.200 0 335.400-100.500 430.200-300.300 7.700-16.200 7.700-35 0-51.500zM512 766c-161.300 0-279.400-81.800-362.700-254C232.600 339.800 350.700 258 512 258c161.300 0 279.400 81.800 362.700 254C791.500 684.200 673.400 766 512 766zm-4-430c-97.200 0-176 78.800-176 176s78.800 176 176 176 176-78.800 176-176-78.800-176-176-176zm0 288c-61.900 0-112-50.100-112-112s50.100-112 112-112 112 50.100 112 112-50.100 112-112 112z"/></svg><span style="margin-left:10px">详情</span></div><div class="act del" style="left:2020px"><svg width="16.25" height="16.25" viewBox="64 64 896 896" fill="currentColor"><path d="M360 184h-8c4.400 0 8-3.600 8-8v8h304v-8c0 4.400 3.600 8 8 8h-8v72h72v-80c0-35.300-28.700-64-64-64H352c-35.300 0-64 28.700-64 64v80h72v-72zm504 72H160c-17.700 0-32 14.300-32 32v32c0 4.400 3.600 8 8 8h60.400l24.700 523c1.600 34.100 29.800 61 63.900 61h454c34.200 0 62.300-26.800 63.900-61l24.700-523H888c4.400 0 8-3.600 8-8v-32c0-17.700-14.300-32-32-32zM731.3 840H292.700l-24.200-512h487l-24.200 512z"/></svg><span style="margin-left:10px">删除</span></div>
</div>
<div class="row" style="top:17px">
<div class="exp"></div><div class="chk"></div>
<div class="sico"><svg width="22.5" height="22.5" viewBox="0 0 24 24" ><path d="M.8 18.600a11.200 11.200 0 0 1 22.400 0z" fill="#3ddc84"/><path d="M5.600 4.800l2.600 4.400M18.400 4.800l-2.600 4.400" stroke="#3ddc84" stroke-width="1.100" stroke-linecap="round"/><circle cx="6.900" cy="13.800" r="1.100" fill="#fff"/><circle cx="17.100" cy="13.800" r="1.100" fill="#fff"/></svg></div>
<div class="cell" style="left:213.500px;font-size:16.49px;letter-spacing:0.00px;">ADB</div><div class="cell" style="left:451px;font-size:16.44px;letter-spacing:0.00px;">192.168.0.5</div><div class="cell" style="left:718.500px;font-size:16.96px;letter-spacing:0.00px;">5555</div>
<div class="tag">待连接</div><div class="cell cj" style="left:1213px">等待连接测试</div>
<div class="act " style="left:1786px"><svg width="16.25" height="16.25" viewBox="64 64 896 896" fill="currentColor"><path d="M917.7 148.800l-42.400-42.400c-1.600-1.600-3.600-2.300-5.700-2.300s-4.100.8-5.700 2.300l-76.100 76.100a199.270 199.270 0 00-112.100-34.300c-51.200 0-102.400 19.500-141.500 58.600L432.300 308.700a8.030 8.030 0 000 11.300L704 591.700c1.600 1.600 3.600 2.300 5.700 2.300 2 0 4.100-.8 5.700-2.300l101.900-101.900c68.900-69 77-175.700 24.300-253.500l76.100-76.100c3.100-3.200 3.100-8.300 0-11.400zM769.100 441.700l-59.400 59.400-186.800-186.800 59.400-59.400c24.900-24.900 58.100-38.700 93.400-38.700 35.300 0 68.400 13.700 93.400 38.700 24.900 24.900 38.700 58.100 38.700 93.400 0 35.300-13.800 68.400-38.700 93.400zm-190.200 105a8.030 8.030 0 00-11.300 0L501 613.300 410.700 523l66.700-66.700c3.100-3.100 3.100-8.200 0-11.300L441 408.600a8.030 8.030 0 00-11.300 0L363 475.300l-43-43a7.850 7.850 0 00-5.700-2.300c-2 0-4.100.8-5.700 2.300L206.800 534.200c-68.900 69-77 175.700-24.300 253.500l-76.100 76.100a8.030 8.030 0 000 11.300l42.400 42.400c1.600 1.600 3.600 2.300 5.700 2.300s4.100-.8 5.700-2.300l76.100-76.100c33.700 22.900 72.900 34.300 112.100 34.300 51.200 0 102.400-19.500 141.500-58.600l101.900-101.900c3.100-3.100 3.100-8.200 0-11.300l-43-43 66.700-66.700c3.100-3.100 3.100-8.200 0-11.300l-36.600-36.200zM441.700 769.100a131.320 131.320 0 01-93.400 38.700c-35.300 0-68.400-13.700-93.400-38.700a131.320 131.320 0 01-38.700-93.400c0-35.300 13.700-68.400 38.700-93.400l59.400-59.400 186.800 186.800-59.400 59.400z"/></svg><span style="margin-left:10px">重连</span></div><div class="act " style="left:1864px"><svg width="16.25" height="16.25" viewBox="64 64 896 896" fill="currentColor"><path d="M257.7 752c2 0 4-.2 6-.5L431.900 722c2-.4 3.900-1.300 5.300-2.800l423.900-423.900a9.960 9.960 0 000-14.100L694.900 114.900c-1.900-1.900-4.400-2.900-7.100-2.900s-5.200 1-7.100 2.900L256.800 538.800c-1.500 1.500-2.400 3.300-2.800 5.300l-29.500 168.200a33.500 33.500 0 009.400 29.800c6.600 6.400 14.900 9.900 23.800 9.900zm67.400-174.400L687.800 215l73.300 73.300-362.700 362.600-88.900 15.700 15.600-89zM880 836H144c-17.700 0-32 14.300-32 32v36c0 4.400 3.600 8 8 8h784c4.400 0 8-3.600 8-8v-36c0-17.700-14.300-32-32-32z"/></svg><span style="margin-left:10px">编辑</span></div><div class="act " style="left:1941.5px"><svg width="17.5" height="17.5" viewBox="64 64 896 896" fill="currentColor"><path d="M942.2 486.2C847.4 286.500 704.100 186 512 186c-192.200 0-335.400 100.500-430.200 300.300a60.300 60.300 0 000 51.500C176.600 737.500 319.900 838 512 838c192.200 0 335.400-100.500 430.200-300.300 7.700-16.200 7.700-35 0-51.500zM512 766c-161.300 0-279.400-81.800-362.700-254C232.600 339.800 350.700 258 512 258c161.300 0 279.400 81.800 362.700 254C791.500 684.200 673.400 766 512 766zm-4-430c-97.200 0-176 78.800-176 176s78.800 176 176 176 176-78.800 176-176-78.800-176-176-176zm0 288c-61.900 0-112-50.100-112-112s50.100-112 112-112 112 50.100 112 112-50.100 112-112 112z"/></svg><span style="margin-left:10px">详情</span></div><div class="act del" style="left:2020px"><svg width="16.25" height="16.25" viewBox="64 64 896 896" fill="currentColor"><path d="M360 184h-8c4.400 0 8-3.600 8-8v8h304v-8c0 4.400 3.600 8 8 8h-8v72h72v-80c0-35.300-28.700-64-64-64H352c-35.300 0-64 28.700-64 64v80h72v-72zm504 72H160c-17.700 0-32 14.300-32 32v32c0 4.400 3.600 8 8 8h60.400l24.700 523c1.600 34.100 29.800 61 63.900 61h454c34.200 0 62.300-26.800 63.900-61l24.700-523H888c4.400 0 8-3.600 8-8v-32c0-17.700-14.300-32-32-32zM731.3 840H292.700l-24.200-512h487l-24.200 512z"/></svg><span style="margin-left:10px">删除</span></div>
</div>
<div class="row" style="top:63px">
<div class="exp"></div><div class="chk"></div>
<div class="sico"><svg width="22.5" height="22.5" viewBox="0 0 24 24" ><path d="M.8 18.600a11.200 11.200 0 0 1 22.400 0z" fill="#3ddc84"/><path d="M5.600 4.800l2.600 4.400M18.400 4.800l-2.600 4.400" stroke="#3ddc84" stroke-width="1.100" stroke-linecap="round"/><circle cx="6.900" cy="13.800" r="1.100" fill="#fff"/><circle cx="17.100" cy="13.800" r="1.100" fill="#fff"/></svg></div>
<div class="cell" style="left:213.500px;font-size:16.49px;letter-spacing:0.00px;">ADB</div><div class="cell" style="left:451px;font-size:16.44px;letter-spacing:0.00px;">192.168.0.4</div><div class="cell" style="left:718.500px;font-size:16.96px;letter-spacing:0.00px;">5555</div>
<div class="tag">待连接</div><div class="cell cj" style="left:1213px">等待连接测试</div>
<div class="act " style="left:1786px"><svg width="16.25" height="16.25" viewBox="64 64 896 896" fill="currentColor"><path d="M917.7 148.800l-42.400-42.400c-1.600-1.600-3.600-2.300-5.700-2.300s-4.100.8-5.700 2.300l-76.100 76.100a199.270 199.270 0 00-112.100-34.300c-51.200 0-102.400 19.500-141.500 58.600L432.300 308.700a8.030 8.030 0 000 11.300L704 591.700c1.600 1.600 3.600 2.300 5.700 2.300 2 0 4.100-.8 5.700-2.300l101.900-101.900c68.900-69 77-175.700 24.300-253.500l76.100-76.100c3.100-3.200 3.100-8.300 0-11.400zM769.100 441.700l-59.400 59.400-186.800-186.800 59.400-59.400c24.900-24.900 58.100-38.700 93.400-38.700 35.300 0 68.400 13.700 93.400 38.700 24.900 24.900 38.700 58.100 38.700 93.400 0 35.300-13.800 68.400-38.700 93.400zm-190.200 105a8.030 8.030 0 00-11.300 0L501 613.300 410.700 523l66.700-66.700c3.100-3.100 3.100-8.200 0-11.300L441 408.600a8.030 8.030 0 00-11.300 0L363 475.300l-43-43a7.850 7.850 0 00-5.700-2.300c-2 0-4.100.8-5.700 2.300L206.800 534.200c-68.900 69-77 175.700-24.300 253.500l-76.100 76.100a8.030 8.030 0 000 11.300l42.400 42.400c1.600 1.600 3.600 2.300 5.700 2.300s4.100-.8 5.700-2.300l76.100-76.100c33.700 22.900 72.900 34.300 112.100 34.300 51.200 0 102.400-19.500 141.500-58.600l101.900-101.900c3.100-3.100 3.100-8.200 0-11.300l-43-43 66.700-66.700c3.100-3.100 3.100-8.200 0-11.300l-36.600-36.200zM441.700 769.100a131.320 131.320 0 01-93.400 38.700c-35.300 0-68.400-13.700-93.400-38.700a131.320 131.320 0 01-38.700-93.400c0-35.300 13.700-68.400 38.700-93.400l59.400-59.400 186.800 186.800-59.400 59.400z"/></svg><span style="margin-left:10px">重连</span></div><div class="act " style="left:1864px"><svg width="16.25" height="16.25" viewBox="64 64 896 896" fill="currentColor"><path d="M257.7 752c2 0 4-.2 6-.5L431.900 722c2-.4 3.900-1.300 5.300-2.800l423.900-423.900a9.960 9.960 0 000-14.100L694.900 114.900c-1.900-1.900-4.400-2.900-7.100-2.900s-5.200 1-7.100 2.900L256.800 538.800c-1.500 1.500-2.400 3.300-2.800 5.300l-29.500 168.200a33.500 33.500 0 009.400 29.800c6.600 6.400 14.900 9.900 23.800 9.900zm67.400-174.400L687.800 215l73.300 73.300-362.700 362.600-88.900 15.700 15.600-89zM880 836H144c-17.700 0-32 14.300-32 32v36c0 4.400 3.600 8 8 8h784c4.400 0 8-3.600 8-8v-36c0-17.700-14.300-32-32-32z"/></svg><span style="margin-left:10px">编辑</span></div><div class="act " style="left:1941.5px"><svg width="17.5" height="17.5" viewBox="64 64 896 896" fill="currentColor"><path d="M942.2 486.2C847.4 286.500 704.100 186 512 186c-192.200 0-335.400 100.500-430.200 300.300a60.300 60.300 0 000 51.500C176.600 737.500 319.900 838 512 838c192.200 0 335.400-100.500 430.200-300.300 7.700-16.200 7.700-35 0-51.500zM512 766c-161.300 0-279.400-81.800-362.700-254C232.600 339.800 350.700 258 512 258c161.300 0 279.400 81.800 362.700 254C791.500 684.200 673.400 766 512 766zm-4-430c-97.200 0-176 78.800-176 176s78.800 176 176 176 176-78.800 176-176-78.800-176-176-176zm0 288c-61.900 0-112-50.100-112-112s50.100-112 112-112 112 50.100 112 112-50.100 112-112 112z"/></svg><span style="margin-left:10px">详情</span></div><div class="act del" style="left:2020px"><svg width="16.25" height="16.25" viewBox="64 64 896 896" fill="currentColor"><path d="M360 184h-8c4.400 0 8-3.600 8-8v8h304v-8c0 4.400 3.600 8 8 8h-8v72h72v-80c0-35.300-28.700-64-64-64H352c-35.300 0-64 28.700-64 64v80h72v-72zm504 72H160c-17.700 0-32 14.300-32 32v32c0 4.400 3.600 8 8 8h60.400l24.700 523c1.600 34.100 29.800 61 63.900 61h454c34.200 0 62.300-26.800 63.900-61l24.700-523H888c4.400 0 8-3.600 8-8v-32c0-17.700-14.300-32-32-32zM731.3 840H292.700l-24.200-512h487l-24.200 512z"/></svg><span style="margin-left:10px">删除</span></div>
</div>
<div class="row" style="top:109px">
<div class="exp open"></div><div class="chk"></div>
<div class="sico"><svg width="22.5" height="22.5" viewBox="0 0 24 24" ><path d="M1.600 3.800V1.600h6.200l1.800 2.200h11.800v2" fill="none" stroke="#f59a23" stroke-width="1.100" stroke-linejoin="round"/><rect x="1.600" y="5.200" width="20.8" height="12.400" rx=".8" fill="none" stroke="#f59a23" stroke-width="1.300"/><text x="12" y="14.300" text-anchor="middle" font-size="7.600" font-weight="700" fill="#f59a23" font-family="Liberation Sans, sans-serif">FTP</text><path d="M12 17.600v3.200M1 21.600h22" stroke="#f59a23" stroke-width="1.200"/><rect x="8.600" y="20.300" width="6.800" height="2.600" rx=".6" fill="#f59a23"/></svg></div>
<div class="cell" style="left:213.500px;font-size:16.00px;letter-spacing:-0.74px;">FTP</div><div class="cell" style="left:451px;font-size:16.30px;letter-spacing:0.00px;">127.0.0.1</div><div class="cell" style="left:718.500px;font-size:16.96px;letter-spacing:0.00px;">21</div>
<div class="cell" style="left:874.500px;font-size:17.60px;letter-spacing:0.39px;">admin</div>
<div class="tag">待连接</div><div class="cell cj" style="left:1213px">等待连接测试</div>
<div class="act " style="left:1786px"><svg width="16.25" height="16.25" viewBox="64 64 896 896" fill="currentColor"><path d="M917.7 148.800l-42.400-42.400c-1.600-1.600-3.600-2.300-5.700-2.300s-4.100.8-5.700 2.300l-76.100 76.100a199.270 199.270 0 00-112.100-34.300c-51.200 0-102.400 19.500-141.500 58.600L432.300 308.700a8.030 8.030 0 000 11.300L704 591.700c1.600 1.600 3.600 2.300 5.700 2.300 2 0 4.100-.8 5.700-2.300l101.900-101.900c68.900-69 77-175.700 24.300-253.500l76.100-76.100c3.100-3.200 3.100-8.300 0-11.400zM769.100 441.700l-59.400 59.400-186.800-186.800 59.400-59.400c24.900-24.900 58.100-38.700 93.400-38.700 35.300 0 68.400 13.700 93.400 38.700 24.900 24.900 38.700 58.100 38.700 93.400 0 35.300-13.800 68.400-38.700 93.400zm-190.200 105a8.030 8.030 0 00-11.300 0L501 613.300 410.700 523l66.700-66.700c3.100-3.100 3.100-8.200 0-11.300L441 408.600a8.030 8.030 0 00-11.300 0L363 475.300l-43-43a7.850 7.850 0 00-5.700-2.300c-2 0-4.100.8-5.700 2.300L206.800 534.200c-68.900 69-77 175.700-24.300 253.500l-76.100 76.100a8.030 8.030 0 000 11.300l42.400 42.400c1.600 1.600 3.600 2.300 5.700 2.300s4.100-.8 5.700-2.300l76.100-76.100c33.700 22.900 72.900 34.300 112.100 34.300 51.200 0 102.400-19.500 141.500-58.600l101.900-101.900c3.100-3.100 3.100-8.200 0-11.300l-43-43 66.700-66.700c3.100-3.100 3.100-8.200 0-11.300l-36.600-36.200zM441.700 769.100a131.320 131.320 0 01-93.400 38.700c-35.300 0-68.400-13.700-93.400-38.700a131.320 131.320 0 01-38.700-93.400c0-35.300 13.700-68.400 38.700-93.400l59.400-59.400 186.800 186.800-59.400 59.400z"/></svg><span style="margin-left:10px">重连</span></div><div class="act " style="left:1864px"><svg width="16.25" height="16.25" viewBox="64 64 896 896" fill="currentColor"><path d="M257.7 752c2 0 4-.2 6-.5L431.900 722c2-.4 3.900-1.300 5.300-2.800l423.900-423.900a9.960 9.960 0 000-14.100L694.900 114.900c-1.900-1.900-4.400-2.900-7.100-2.900s-5.200 1-7.100 2.900L256.800 538.800c-1.500 1.500-2.400 3.300-2.800 5.300l-29.500 168.200a33.500 33.500 0 009.400 29.800c6.600 6.400 14.900 9.900 23.800 9.900zm67.400-174.400L687.800 215l73.300 73.300-362.700 362.600-88.900 15.700 15.600-89zM880 836H144c-17.700 0-32 14.300-32 32v36c0 4.400 3.600 8 8 8h784c4.400 0 8-3.600 8-8v-36c0-17.700-14.300-32-32-32z"/></svg><span style="margin-left:10px">编辑</span></div><div class="act " style="left:1941.5px"><svg width="17.5" height="17.5" viewBox="64 64 896 896" fill="currentColor"><path d="M942.2 486.2C847.4 286.500 704.100 186 512 186c-192.200 0-335.400 100.500-430.200 300.300a60.300 60.300 0 000 51.500C176.600 737.500 319.900 838 512 838c192.200 0 335.400-100.500 430.200-300.300 7.700-16.200 7.700-35 0-51.500zM512 766c-161.300 0-279.400-81.800-362.700-254C232.600 339.800 350.700 258 512 258c161.300 0 279.400 81.800 362.700 254C791.500 684.200 673.400 766 512 766zm-4-430c-97.200 0-176 78.800-176 176s78.800 176 176 176 176-78.800 176-176-78.800-176-176-176zm0 288c-61.900 0-112-50.100-112-112s50.100-112 112-112 112 50.100 112 112-50.100 112-112 112z"/></svg><span style="margin-left:10px">收起</span></div><div class="act del" style="left:2020px"><svg width="16.25" height="16.25" viewBox="64 64 896 896" fill="currentColor"><path d="M360 184h-8c4.400 0 8-3.600 8-8v8h304v-8c0 4.400 3.600 8 8 8h-8v72h72v-80c0-35.300-28.700-64-64-64H352c-35.300 0-64 28.700-64 64v80h72v-72zm504 72H160c-17.700 0-32 14.300-32 32v32c0 4.400 3.600 8 8 8h60.400l24.700 523c1.600 34.100 29.800 61 63.900 61h454c34.200 0 62.300-26.800 63.900-61l24.700-523H888c4.400 0 8-3.600 8-8v-32c0-17.700-14.300-32-32-32zM731.3 840H292.700l-24.200-512h487l-24.200 512z"/></svg><span style="margin-left:10px">删除</span></div>
</div>
<div class="expand">
<div class="panel" style="left:35px;top:32px;width:2141px;height:213px">
<div class="ptitle" style="top:3.500px"><span style="margin-left:4px;margin-right:8px"><svg width="17" height="18" viewBox="0 0 17 18"><rect x="1" y="2" width="15" height="15.500" rx="1.200" fill="#d9a27f"/><rect x="2.800" y="3.600" width="11.400" height="12.600" fill="#f3eef5"/><path d="M11.200 16.200l3-3v3z" fill="#d9a27f"/><rect x="5" y=".6" width="7" height="3.300" rx="1" fill="#9aa0aa"/><path d="M4.500 7h8M4.500 9.300h8M4.500 11.600h8M4.500 13.900h5" stroke="#b9b3c6" stroke-width=".9"/></svg></span>连接信息</div>
<div class="pline" style="top:52.500px;background:#1890ff"></div>
<div class="il" style="left:15px;top:75.5px">服务类型</div>
<div class="il" style="left:15px;top:122px">状态</div>
<div class="il" style="left:15px;top:168px">创建时间</div>
<div class="il" style="left:723px;top:75.5px">IP 地址</div>
<div class="il" style="left:723px;top:122px">用户名</div>
<div class="il" style="left:723px;top:168px">连接时间</div>
<div class="il" style="left:1431.5px;top:75.5px">端口</div>
<div class="il" style="left:1431.5px;top:122px">密码</div>
<div class="il" style="left:1431.5px;top:168px">消息</div>
<div class="abs" style="left:100.500px;top:75px"><svg width="21" height="21" viewBox="0 0 24 24" ><path d="M1.600 3.800V1.600h6.200l1.800 2.200h11.800v2" fill="none" stroke="#f59a23" stroke-width="1.100" stroke-linejoin="round"/><rect x="1.600" y="5.200" width="20.8" height="12.400" rx=".8" fill="none" stroke="#f59a23" stroke-width="1.300"/><text x="12" y="14.300" text-anchor="middle" font-size="7.600" font-weight="700" fill="#f59a23" font-family="Liberation Sans, sans-serif">FTP</text><path d="M12 17.600v3.200M1 21.600h22" stroke="#f59a23" stroke-width="1.200"/><rect x="8.600" y="20.300" width="6.800" height="2.600" rx=".6" fill="#f59a23"/></svg></div>
<div class="abs" style="left:130px;top:72px;width:43px;height:27px;line-height:27px;border-radius:4px;background:#ffa300;color:#fff;text-align:center;font-size:14.80px;letter-spacing:-1.32px;">FTP</div>
<div class="tag abs" style="left:100px;top:119px;width:65px;height:27px;line-height:25px">待连接</div>
<div class="iv mono" style="left:100px;top:169.5px;font-size:13.750px;color:#434343;">2026/1/16 00:44:35</div>
<div class="iv mono" style="left:808px;top:76.5px;font-size:14.900px;font-weight:700;color:#1890ff">127.0.0.1</div>
<div class="iv " style="left:808px;top:122px;font-size:16.00px;letter-spacing:0.12px;">admin</div>
<div class="iv mono" style="left:808px;top:169.5px;font-size:13.750px;color:#434343;">2026/1/16 00:44:35</div>
<div class="iv " style="left:1516.5px;top:74.7px;font-size:15px;font-weight:700;color:#1890ff">21</div>
<div class="iv " style="left:1516.5px;top:122px;font-size:15px;letter-spacing:.85px">******</div>
<div class="iv " style="left:1516.5px;top:168px;font-size:15px;color:#434343">等待连接测试</div>
</div>
<div class="panel" style="left:35px;top:260px;width:856px;height:557px">
<div class="ptitle" style="top:3.500px"><span style="margin-left:4px;margin-right:7px"><svg width="18" height="18" viewBox="0 0 18 18"><path d="M2 1h9l4 4v12H2z" fill="#e6e2ea"/><path d="M11 1l4 4h-4z" fill="#c9c3d1"/><path d="M4 5h6M4 7.500h8M4 10h7M4 12.500h4" stroke="#b5aebf" stroke-width=".9"/><path d="M7 15.500l1-3.300 6.500-5.200 2.300 2.600-6.600 5.300z" fill="#f0683c"/><path d="M7 15.500l1-3.300 2.200 2.700z" fill="#f7c9a4"/><path d="M14.500 7l1.200-1 2.200 2.600-1.100 1z" fill="#f5a623"/></svg></span>连接日志</div>
<div class="pline" style="top:52.500px;background:#52c41a"></div>
<div class="logbox">
<div class="ll mono" style="top:16.5px">[00:44:35] <b>开始连接</b> FTP <b>服务</b></div>
<div class="ll mono" style="top:45.5px">[00:44:35] <b>目标地址</b>: 127.0.0.1:21</div>
<div class="ll mono" style="top:74.5px">[00:44:35] <b>用户名</b>: admin</div>
<div class="ll mono" style="top:103.5px">[00:44:35] <b>使用密码认证</b></div>
<div class="ll mono" style="top:132.5px">[00:44:35] <b>连接地址</b>: 127.0.0.1:21</div>
<div class="ll mono" style="top:161.5px">[00:44:35] <b>尝试用户</b> admin <b>密码认证</b></div>
<div class="ll mono" style="top:190.5px">[00:44:35] <b>✓ 密码认证成功</b></div>
<div class="ll mono" style="top:219.5px">[00:44:35] <b>获取根目录文件列表</b></div>
</div></div>
<div class="abs" style="left:891px;top:260px;width:7px;height:557px;background:#e8e8e8"></div>
<div class="abs" style="left:35px;top:817px;width:2141px;height:6px;background:#e8e8e8"></div>
<div class="panel" style="left:897.500px;top:260px;width:1278.500px;height:557px">
<div class="ptitle" style="top:3.500px"><span style="margin-left:2px;margin-right:8px"><svg width="18" height="17" viewBox="0 0 18 17"><defs><linearGradient id="fg" x1="0" y1="0" x2="0" y2="1"><stop offset="0" stop-color="#ffdd6e"/><stop offset="1" stop-color="#ffb65a"/></linearGradient></defs><path d="M.5 .8h6.800l2.200 2.800h8v12.600H.5z" fill="url(#fg)"/><path d="M.5 .8h6.800l2.200 2.800H.5z" fill="#ffc455"/></svg></span>文件浏览器</div>
<div class="pline" style="top:52.500px;background:#1890ff"></div>
<div class="fbar"><div class="abs" style="left:14px;top:20px;display:flex;align-items:center;color:#1890ff;font-size:17.500px;height:19px"><svg width="18.5" height="18.5" viewBox="0 .3 16 16" fill="none" stroke="#1890ff" stroke-width="1.2" stroke-linecap="butt" stroke-linejoin="miter"><path d="M1.200 8.300L8 1.600l6.800 6.700M3 7.200v7.200h3.600v-4.600h2.800v4.600H13V7.200"/></svg><span style="margin-left:4.500px">根目录</span></div><div class="abs" style="left:1210px;top:19.500px"><svg width="17" height="17" viewBox="64 64 896 896" fill="#262626"><path d="M909.1 209.3l-56.4 44.1C775.8 155.1 656.2 92 521.9 92 290 92 102.3 279.5 102 511.5 101.7 743.7 289.8 932 521.9 932c181.3 0 335.8-115 394.6-276.1 1.500-4.200-.7-8.900-4.900-10.300l-56.700-19.500a8 8 0 00-10.100 4.800c-1.800 5-3.800 10-5.900 14.900-17.300 41-42.100 77.800-73.700 109.400A344.770 344.770 0 01655.9 829c-42.300 17.900-87.400 27-133.800 27-46.500 0-91.500-9.100-133.800-27A341.500 341.500 0 01279 755.200a342.160 342.160 0 01-73.700-109.400c-17.900-42.400-27-87.400-27-133.900s9.100-91.500 27-133.900c17.300-41 42.100-77.800 73.700-109.400 31.600-31.600 68.400-56.400 109.300-73.800 42.300-17.900 87.400-27 133.800-27 46.500 0 91.500 9.100 133.800 27a341.500 341.500 0 01109.300 73.800c9.900 9.900 19.200 20.400 27.800 31.400l-60.200 47a8 8 0 003 14.100l175.600 43c5 1.200 9.900-2.600 9.900-7.700l.8-180.900c-.1-6.600-7.800-10.300-13-6.200z"/></svg></div></div>
<div class="fhead"><span style="left:15px;font-weight:700;font-size:17.500px;color:#1f1f1f">名称</span><span style="left:891px;top:-1.400px;font-size:16.500px;color:#333">大小</span><span style="left:945.500px;top:-1.400px;font-weight:700;font-size:16.250px;color:#8c8c8c">修改时间</span><span style="left:1165px;font-weight:700;font-size:17.500px;color:#1f1f1f">操作</span></div>
<div class="abs" style="left:0;top:183px;width:1262px;height:358px;overflow:hidden">
<div class="frow" style="top:0.0px;height:53.0px"><div class="abs" style="left:16px;top:17.0px"><svg width="22" height="22" viewBox="0.600 1.200 16 16" fill="none" stroke="#faa61a" stroke-width="1.33" stroke-linecap="butt" stroke-linejoin="miter"><path d="M1.400 2.800h4.800l1.800 1.900h6.600v8.700H1.400z"/></svg></div><span style="left:48px;top:17.2px;font-size:16.00px;letter-spacing:-1.40px;">1</span><span style="left:905px;top:17.0px;font-size:16px;color:#595959">-</span><span style="left:932px;top:17.0px;color:#8c8c8c;font-size:15.88px;letter-spacing:0.00px;">2025-02-18 00:00:00</span></div>
<div class="frow" style="top:53.0px;height:53.6px"><div class="abs" style="left:16px;top:17.6px"><svg width="22" height="22" viewBox="0.600 1.200 16 16" fill="none" stroke="#faa61a" stroke-width="1.33" stroke-linecap="butt" stroke-linejoin="miter"><path d="M1.400 2.800h4.800l1.800 1.900h6.600v8.700H1.400z"/></svg></div><span style="left:48px;top:17.8px;font-size:16.72px;letter-spacing:0.00px;">10</span><span style="left:905px;top:17.6px;font-size:16px;color:#595959">-</span><span style="left:932px;top:17.6px;color:#8c8c8c;font-size:15.88px;letter-spacing:0.00px;">2025-02-18 00:00:00</span></div>
<div class="frow" style="top:106.6px;height:53.6px"><div class="abs" style="left:16px;top:17.6px"><svg width="22" height="22" viewBox="0.600 1.200 16 16" fill="none" stroke="#faa61a" stroke-width="1.33" stroke-linecap="butt" stroke-linejoin="miter"><path d="M1.400 2.800h4.800l1.800 1.900h6.600v8.700H1.400z"/></svg></div><span style="left:48px;top:17.8px;font-size:17.50px;letter-spacing:0.22px;">11</span><span style="left:905px;top:17.6px;font-size:16px;color:#595959">-</span><span style="left:932px;top:17.6px;color:#8c8c8c;font-size:15.88px;letter-spacing:0.00px;">2025-02-18 00:00:00</span></div>
<div class="frow" style="top:160.2px;height:53.6px"><div class="abs" style="left:16px;top:17.6px"><svg width="22" height="22" viewBox="0.600 1.200 16 16" fill="none" stroke="#faa61a" stroke-width="1.33" stroke-linecap="butt" stroke-linejoin="miter"><path d="M1.400 2.800h4.800l1.800 1.900h6.600v8.700H1.400z"/></svg></div><span style="left:48px;top:17.8px;font-size:16.72px;letter-spacing:0.00px;">12</span><span style="left:905px;top:17.6px;font-size:16px;color:#595959">-</span><span style="left:932px;top:17.6px;color:#8c8c8c;font-size:15.88px;letter-spacing:0.00px;">2025-02-18 00:00:00</span></div>
<div class="frow" style="top:213.9px;height:53.6px"><div class="abs" style="left:16px;top:17.5px"><svg width="22" height="22" viewBox="0.600 1.200 16 16" fill="none" stroke="#faa61a" stroke-width="1.33" stroke-linecap="butt" stroke-linejoin="miter"><path d="M1.400 2.800h4.800l1.800 1.900h6.600v8.700H1.400z"/></svg></div><span style="left:48px;top:17.7px;font-size:16.72px;letter-spacing:0.00px;">13</span><span style="left:905px;top:17.5px;font-size:16px;color:#595959">-</span><span style="left:932px;top:17.5px;color:#8c8c8c;font-size:15.88px;letter-spacing:0.00px;">2025-02-18 00:00:00</span></div>
<div class="frow" style="top:267.5px;height:53.6px"><div class="abs" style="left:16px;top:17.5px"><svg width="22" height="22" viewBox="0.600 1.200 16 16" fill="none" stroke="#faa61a" stroke-width="1.33" stroke-linecap="butt" stroke-linejoin="miter"><path d="M1.400 2.800h4.800l1.800 1.900h6.600v8.700H1.400z"/></svg></div><span style="left:48px;top:17.7px;font-size:16.72px;letter-spacing:0.00px;">14</span><span style="left:905px;top:17.5px;font-size:16px;color:#595959">-</span><span style="left:932px;top:17.5px;color:#8c8c8c;font-size:15.88px;letter-spacing:0.00px;">2025-02-18 00:00:00</span></div>
<div class="frow" style="top:321.1px;height:53.6px"><div class="abs" style="left:16px;top:17.5px"><svg width="22" height="22" viewBox="0.600 1.200 16 16" fill="none" stroke="#faa61a" stroke-width="1.33" stroke-linecap="butt" stroke-linejoin="miter"><path d="M1.400 2.800h4.800l1.800 1.900h6.600v8.700H1.400z"/></svg></div><span style="left:48px;top:17.7px;font-size:16.72px;letter-spacing:0.00px;">15</span><span style="left:905px;top:17.5px;font-size:16px;color:#595959">-</span><span style="left:932px;top:17.5px;color:#8c8c8c;font-size:15.88px;letter-spacing:0.00px;">2025-02-18 00:00:00</span></div>
</div>
<div class="abs" style="left:1248px;top:183px;width:13px;height:358px;background:#f1f1f1"></div>
<svg class="abs" style="left:1250px;top:186px" width="9" height="7" viewBox="0 0 9 7"><path d="M4.500 .5L8.500 6h-8z" fill="#b5b5b5"/></svg>
<div class="abs" style="left:1251px;top:197px;width:7px;height:25px;border-radius:3.500px;background:#c1c1c1"></div>
<svg class="abs" style="left:1250px;top:531px" width="9" height="7" viewBox="0 0 9 7"><path d="M4.500 6.500L.5 1h8z" fill="#b5b5b5"/></svg>
</div>
</div>
<div class="row" style="top:1011px">
<div class="exp"></div><div class="chk"></div>
<div class="sico"><svg width="22.5" height="22.5" viewBox="0 0 24 24" ><path d="M2.600 7A10.400 10.400 0 0 1 12 1c4.200 0 7.800 2.400 9.400 6z" fill="#fec514"/><path d="M.6 9.300h15.400a2.700 2.700 0 0 1 0 5.400H.6a11 11 0 0 1 0-5.400z" fill="#343741"/><path d="M2.600 17h18.800A10.400 10.400 0 0 1 12 23a10.400 10.400 0 0 1-9.400-6z" fill="#00bfb3"/></svg></div>
<div class="cell" style="left:213.500px;font-size:16.40px;letter-spacing:-0.00px;">Elasticsearch</div><div class="cell" style="left:451px;font-size:16.30px;letter-spacing:0.00px;">127.0.0.1</div><div class="cell" style="left:718.500px;font-size:16.96px;letter-spacing:0.00px;">9200</div>
<div class="tag">待连接</div><div class="cell cj" style="left:1213px">等待连接测试</div>
<div class="act " style="left:1786px"><svg width="16.25" height="16.25" viewBox="64 64 896 896" fill="currentColor"><path d="M917.7 148.800l-42.400-42.400c-1.600-1.600-3.600-2.300-5.700-2.300s-4.100.8-5.700 2.300l-76.100 76.100a199.270 199.270 0 00-112.100-34.300c-51.200 0-102.400 19.500-141.500 58.600L432.300 308.700a8.030 8.030 0 000 11.300L704 591.700c1.600 1.600 3.600 2.300 5.700 2.300 2 0 4.100-.8 5.700-2.300l101.900-101.900c68.900-69 77-175.700 24.300-253.500l76.100-76.100c3.100-3.200 3.100-8.300 0-11.400zM769.100 441.700l-59.400 59.400-186.800-186.800 59.400-59.400c24.900-24.900 58.100-38.700 93.400-38.700 35.300 0 68.400 13.700 93.400 38.700 24.900 24.900 38.700 58.100 38.700 93.400 0 35.300-13.800 68.400-38.700 93.400zm-190.200 105a8.030 8.030 0 00-11.300 0L501 613.300 410.700 523l66.700-66.700c3.100-3.100 3.100-8.200 0-11.300L441 408.600a8.030 8.030 0 00-11.300 0L363 475.300l-43-43a7.850 7.850 0 00-5.700-2.300c-2 0-4.100.8-5.700 2.300L206.800 534.200c-68.900 69-77 175.700-24.300 253.500l-76.100 76.100a8.030 8.030 0 000 11.300l42.400 42.400c1.600 1.600 3.600 2.300 5.700 2.300s4.100-.8 5.700-2.300l76.100-76.100c33.700 22.900 72.900 34.300 112.100 34.300 51.200 0 102.400-19.500 141.500-58.600l101.900-101.900c3.100-3.100 3.100-8.200 0-11.300l-43-43 66.700-66.700c3.100-3.100 3.100-8.200 0-11.300l-36.600-36.200zM441.700 769.100a131.320 131.320 0 01-93.400 38.700c-35.300 0-68.400-13.700-93.400-38.700a131.320 131.320 0 01-38.700-93.400c0-35.300 13.700-68.400 38.700-93.400l59.400-59.400 186.800 186.800-59.400 59.400z"/></svg><span style="margin-left:10px">重连</span></div><div class="act " style="left:1864px"><svg width="16.25" height="16.25" viewBox="64 64 896 896" fill="currentColor"><path d="M257.7 752c2 0 4-.2 6-.5L431.900 722c2-.4 3.900-1.300 5.300-2.800l423.900-423.900a9.960 9.960 0 000-14.100L694.900 114.900c-1.900-1.900-4.400-2.900-7.100-2.900s-5.200 1-7.100 2.900L256.800 538.800c-1.500 1.500-2.400 3.300-2.800 5.300l-29.500 168.200a33.500 33.500 0 009.400 29.800c6.600 6.400 14.900 9.900 23.800 9.900zm67.400-174.400L687.800 215l73.300 73.300-362.700 362.600-88.900 15.700 15.600-89zM880 836H144c-17.700 0-32 14.300-32 32v36c0 4.400 3.600 8 8 8h784c4.400 0 8-3.600 8-8v-36c0-17.700-14.300-32-32-32z"/></svg><span style="margin-left:10px">编辑</span></div><div class="act " style="left:1941.5px"><svg width="17.5" height="17.5" viewBox="64 64 896 896" fill="currentColor"><path d="M942.2 486.2C847.4 286.500 704.100 186 512 186c-192.200 0-335.400 100.500-430.200 300.300a60.300 60.300 0 000 51.500C176.600 737.500 319.900 838 512 838c192.200 0 335.400-100.500 430.200-300.300 7.700-16.200 7.700-35 0-51.500zM512 766c-161.300 0-279.400-81.800-362.700-254C232.600 339.800 350.700 258 512 258c161.300 0 279.400 81.800 362.700 254C791.500 684.200 673.400 766 512 766zm-4-430c-97.200 0-176 78.800-176 176s78.800 176 176 176 176-78.800 176-176-78.800-176-176-176zm0 288c-61.900 0-112-50.100-112-112s50.100-112 112-112 112 50.100 112 112-50.100 112-112 112z"/></svg><span style="margin-left:10px">详情</span></div><div class="act del" style="left:2020px"><svg width="16.25" height="16.25" viewBox="64 64 896 896" fill="currentColor"><path d="M360 184h-8c4.400 0 8-3.600 8-8v8h304v-8c0 4.400 3.600 8 8 8h-8v72h72v-80c0-35.300-28.700-64-64-64H352c-35.300 0-64 28.700-64 64v80h72v-72zm504 72H160c-17.700 0-32 14.300-32 32v32c0 4.400 3.600 8 8 8h60.400l24.700 523c1.600 34.100 29.800 61 63.900 61h454c34.200 0 62.300-26.800 63.900-61l24.700-523H888c4.400 0 8-3.600 8-8v-32c0-17.700-14.300-32-32-32zM731.3 840H292.700l-24.200-512h487l-24.200 512z"/></svg><span style="margin-left:10px">删除</span></div>
</div>
<div class="row" style="top:1057px">
<div class="exp"></div><div class="chk"></div>
<div class="sico"><svg width="22.5" height="22.5" viewBox="0 0 24 24" ><rect x="1.300" y="3.300" width="21.400" height="14.400" rx="1.600" fill="#e3f1fd" stroke="#2f8fe8" stroke-width="1.500"/><path d="M7.600 7.700h2.800v2.800H7.600zM11.200 7.700H14v2.800h-2.800zM7.600 11.300h2.800v2.800H7.600zM11.200 11.300H14v2.800h-2.800z" fill="#2f8fe8"/><path d="M17.600 5.400l.6 1.300 1.300.6-1.300.6-.6 1.300-.6-1.300-1.300-.6 1.300-.6zM15.300 9.300l.4.800.8.400-.8.400-.4.800-.4-.8-.8-.4.800-.4z" fill="#2f8fe8"/><path d="M9.200 17.700h5.600l1.400 3.400H7.800z" fill="#2f8fe8"/></svg></div>
<div class="cell" style="left:213.500px;font-size:16.00px;letter-spacing:-0.26px;">RDP</div><div class="cell" style="left:451px;font-size:16.64px;letter-spacing:0.00px;">10.0.1.115</div><div class="cell" style="left:718.500px;font-size:16.96px;letter-spacing:0.00px;">3389</div>
<div class="cell" style="left:874.500px;font-size:16.63px;letter-spacing:-0.00px;">bypass</div>
<div class="tag">待连接</div><div class="cell cj" style="left:1213px">等待连接测试</div>
<div class="act " style="left:1786px"><svg width="16.25" height="16.25" viewBox="64 64 896 896" fill="currentColor"><path d="M917.7 148.800l-42.400-42.400c-1.600-1.600-3.600-2.300-5.700-2.300s-4.100.8-5.700 2.300l-76.100 76.100a199.270 199.270 0 00-112.100-34.300c-51.200 0-102.400 19.500-141.500 58.600L432.300 308.700a8.030 8.030 0 000 11.300L704 591.700c1.600 1.600 3.600 2.300 5.700 2.300 2 0 4.100-.8 5.700-2.300l101.900-101.900c68.900-69 77-175.700 24.300-253.500l76.100-76.100c3.100-3.200 3.100-8.300 0-11.400zM769.100 441.700l-59.400 59.400-186.800-186.800 59.400-59.400c24.900-24.900 58.100-38.700 93.400-38.700 35.300 0 68.400 13.700 93.400 38.700 24.900 24.900 38.700 58.100 38.700 93.400 0 35.300-13.800 68.400-38.700 93.400zm-190.200 105a8.030 8.030 0 00-11.300 0L501 613.300 410.700 523l66.700-66.700c3.100-3.100 3.100-8.200 0-11.300L441 408.600a8.030 8.030 0 00-11.300 0L363 475.300l-43-43a7.850 7.850 0 00-5.700-2.300c-2 0-4.100.8-5.700 2.300L206.800 534.200c-68.900 69-77 175.700-24.300 253.500l-76.100 76.100a8.030 8.030 0 000 11.300l42.400 42.400c1.600 1.600 3.600 2.300 5.700 2.300s4.100-.8 5.700-2.300l76.100-76.100c33.700 22.900 72.900 34.300 112.100 34.300 51.200 0 102.400-19.500 141.500-58.600l101.900-101.900c3.100-3.100 3.100-8.200 0-11.300l-43-43 66.700-66.700c3.100-3.100 3.100-8.200 0-11.300l-36.600-36.200zM441.700 769.100a131.320 131.320 0 01-93.400 38.700c-35.300 0-68.400-13.700-93.400-38.700a131.320 131.320 0 01-38.700-93.400c0-35.300 13.700-68.400 38.700-93.400l59.400-59.400 186.800 186.800-59.400 59.400z"/></svg><span style="margin-left:10px">重连</span></div><div class="act " style="left:1864px"><svg width="16.25" height="16.25" viewBox="64 64 896 896" fill="currentColor"><path d="M257.7 752c2 0 4-.2 6-.5L431.900 722c2-.4 3.900-1.300 5.300-2.800l423.900-423.900a9.960 9.960 0 000-14.100L694.900 114.900c-1.900-1.900-4.400-2.900-7.100-2.900s-5.200 1-7.100 2.900L256.800 538.800c-1.500 1.500-2.400 3.300-2.800 5.300l-29.500 168.200a33.500 33.500 0 009.400 29.800c6.600 6.400 14.900 9.900 23.800 9.900zm67.400-174.400L687.800 215l73.300 73.300-362.700 362.600-88.900 15.700 15.600-89zM880 836H144c-17.700 0-32 14.300-32 32v36c0 4.400 3.600 8 8 8h784c4.400 0 8-3.600 8-8v-36c0-17.700-14.300-32-32-32z"/></svg><span style="margin-left:10px">编辑</span></div><div class="act " style="left:1941.5px"><svg width="17.5" height="17.5" viewBox="64 64 896 896" fill="currentColor"><path d="M942.2 486.2C847.4 286.500 704.100 186 512 186c-192.200 0-335.400 100.500-430.200 300.300a60.300 60.300 0 000 51.500C176.600 737.500 319.900 838 512 838c192.200 0 335.400-100.500 430.200-300.300 7.700-16.200 7.700-35 0-51.500zM512 766c-161.300 0-279.400-81.800-362.700-254C232.600 339.800 350.700 258 512 258c161.300 0 279.400 81.800 362.700 254C791.500 684.200 673.400 766 512 766zm-4-430c-97.200 0-176 78.800-176 176s78.800 176 176 176 176-78.800 176-176-78.800-176-176-176zm0 288c-61.900 0-112-50.100-112-112s50.100-112 112-112 112 50.100 112 112-50.100 112-112 112z"/></svg><span style="margin-left:10px">详情</span></div><div class="act del" style="left:2020px"><svg width="16.25" height="16.25" viewBox="64 64 896 896" fill="currentColor"><path d="M360 184h-8c4.400 0 8-3.600 8-8v8h304v-8c0 4.400 3.600 8 8 8h-8v72h72v-80c0-35.300-28.700-64-64-64H352c-35.300 0-64 28.700-64 64v80h72v-72zm504 72H160c-17.700 0-32 14.300-32 32v32c0 4.400 3.600 8 8 8h60.400l24.700 523c1.600 34.100 29.800 61 63.900 61h454c34.200 0 62.300-26.800 63.900-61l24.700-523H888c4.400 0 8-3.600 8-8v-32c0-17.700-14.300-32-32-32zM731.3 840H292.700l-24.200-512h487l-24.200 512z"/></svg><span style="margin-left:10px">删除</span></div>
</div>
<div class="row" style="top:1103px">
<div class="exp"></div><div class="chk"></div>
<div class="sico"><svg width="22.5" height="22.5" viewBox="0 0 24 24" ><g transform="translate(12 12.300)" fill="#419eda"><path d="M-3.400 -8.500L-2.800 -12.300H2.800L3.400 -8.500z" transform="rotate(180)"/><path d="M-3.400 -8.500L-2.800 -12.300H2.800L3.400 -8.500z" transform="rotate(252)"/><path d="M-3.400 -8.500L-2.800 -12.300H2.800L3.400 -8.500z" transform="rotate(324)"/><path d="M-3.400 -8.500L-2.800 -12.300H2.800L3.400 -8.500z" transform="rotate(36)"/><path d="M-3.400 -8.500L-2.800 -12.300H2.800L3.400 -8.500z" transform="rotate(108)"/><circle r="9.400"/><path d="M0 -5.900c3.400 0 6 1.900 6 5 0 2.600-1.600 4.800-3.400 5.900h-5.200C-4.400 3.900-6 1.700-6-.9c0-3.100 2.600-5 6-5z" fill="#fff"/><circle cx="-2.400" cy="-.8" r="1.350"/><circle cx="2.400" cy="-.8" r="1.350"/></g></svg></div>
<div class="cell" style="left:213.500px;font-size:16.79px;letter-spacing:0.00px;">Etcd</div><div class="cell" style="left:451px;font-size:16.53px;letter-spacing:0.00px;">192.168.3.130</div><div class="cell" style="left:718.500px;font-size:16.96px;letter-spacing:0.00px;">2379</div>
<div class="tag">待连接</div><div class="cell cj" style="left:1213px">等待连接测试</div>
<div class="act " style="left:1786px"><svg width="16.25" height="16.25" viewBox="64 64 896 896" fill="currentColor"><path d="M917.7 148.800l-42.400-42.400c-1.600-1.600-3.600-2.300-5.700-2.300s-4.100.8-5.700 2.300l-76.100 76.100a199.270 199.270 0 00-112.100-34.300c-51.200 0-102.400 19.500-141.500 58.600L432.300 308.700a8.030 8.030 0 000 11.300L704 591.700c1.600 1.600 3.600 2.300 5.700 2.300 2 0 4.100-.8 5.700-2.300l101.900-101.900c68.900-69 77-175.700 24.300-253.500l76.100-76.100c3.100-3.200 3.100-8.300 0-11.400zM769.100 441.700l-59.400 59.400-186.800-186.800 59.400-59.400c24.900-24.900 58.100-38.700 93.400-38.700 35.300 0 68.400 13.700 93.400 38.700 24.900 24.900 38.700 58.100 38.700 93.400 0 35.300-13.800 68.400-38.700 93.400zm-190.200 105a8.030 8.030 0 00-11.300 0L501 613.300 410.700 523l66.700-66.700c3.100-3.100 3.100-8.200 0-11.300L441 408.600a8.030 8.030 0 00-11.300 0L363 475.300l-43-43a7.850 7.850 0 00-5.700-2.300c-2 0-4.100.8-5.700 2.300L206.800 534.200c-68.900 69-77 175.700-24.300 253.500l-76.100 76.100a8.030 8.030 0 000 11.300l42.400 42.400c1.600 1.600 3.600 2.300 5.700 2.300s4.100-.8 5.700-2.300l76.100-76.100c33.700 22.900 72.900 34.300 112.100 34.300 51.200 0 102.400-19.500 141.500-58.600l101.900-101.900c3.100-3.100 3.100-8.200 0-11.300l-43-43 66.700-66.700c3.100-3.100 3.100-8.200 0-11.300l-36.600-36.200zM441.700 769.100a131.320 131.320 0 01-93.400 38.700c-35.300 0-68.400-13.700-93.400-38.700a131.320 131.320 0 01-38.700-93.400c0-35.300 13.700-68.400 38.700-93.400l59.400-59.400 186.800 186.800-59.400 59.400z"/></svg><span style="margin-left:10px">重连</span></div><div class="act " style="left:1864px"><svg width="16.25" height="16.25" viewBox="64 64 896 896" fill="currentColor"><path d="M257.7 752c2 0 4-.2 6-.5L431.900 722c2-.4 3.900-1.300 5.300-2.800l423.900-423.900a9.960 9.960 0 000-14.100L694.900 114.900c-1.900-1.900-4.400-2.900-7.100-2.900s-5.200 1-7.100 2.900L256.800 538.800c-1.500 1.500-2.400 3.300-2.800 5.300l-29.500 168.200a33.500 33.500 0 009.400 29.800c6.600 6.400 14.900 9.900 23.800 9.900zm67.400-174.400L687.800 215l73.300 73.300-362.700 362.600-88.900 15.700 15.600-89zM880 836H144c-17.700 0-32 14.300-32 32v36c0 4.400 3.600 8 8 8h784c4.400 0 8-3.600 8-8v-36c0-17.700-14.300-32-32-32z"/></svg><span style="margin-left:10px">编辑</span></div><div class="act " style="left:1941.5px"><svg width="17.5" height="17.5" viewBox="64 64 896 896" fill="currentColor"><path d="M942.2 486.2C847.4 286.500 704.100 186 512 186c-192.200 0-335.400 100.500-430.200 300.300a60.300 60.300 0 000 51.500C176.600 737.500 319.900 838 512 838c192.200 0 335.400-100.500 430.200-300.300 7.700-16.200 7.700-35 0-51.500zM512 766c-161.300 0-279.400-81.800-362.700-254C232.600 339.800 350.700 258 512 258c161.300 0 279.400 81.800 362.700 254C791.500 684.200 673.400 766 512 766zm-4-430c-97.200 0-176 78.800-176 176s78.800 176 176 176 176-78.800 176-176-78.800-176-176-176zm0 288c-61.900 0-112-50.100-112-112s50.100-112 112-112 112 50.100 112 112-50.100 112-112 112z"/></svg><span style="margin-left:10px">详情</span></div><div class="act del" style="left:2020px"><svg width="16.25" height="16.25" viewBox="64 64 896 896" fill="currentColor"><path d="M360 184h-8c4.400 0 8-3.600 8-8v8h304v-8c0 4.400 3.600 8 8 8h-8v72h72v-80c0-35.300-28.700-64-64-64H352c-35.300 0-64 28.700-64 64v80h72v-72zm504 72H160c-17.700 0-32 14.300-32 32v32c0 4.400 3.600 8 8 8h60.400l24.700 523c1.600 34.100 29.800 61 63.900 61h454c34.200 0 62.300-26.800 63.900-61l24.700-523H888c4.400 0 8-3.600 8-8v-32c0-17.700-14.300-32-32-32zM731.3 840H292.700l-24.200-512h487l-24.200 512z"/></svg><span style="margin-left:10px">删除</span></div>
</div>
<div class="row" style="top:1149px">
<div class="exp"></div><div class="chk"></div>
<div class="sico"><svg width="22.5" height="22.5" viewBox="0 0 25 25" ><path d="M.2 14L12.500 18.5L24.800 14v4L12.500 22.5L.2 18z" fill="#a41e11"/><path d="M.2 14L12.500 18.5L24.800 14v2.300L12.500 20.8L.2 16.3z" fill="#c6302b"/><path d="M.2 10L12.500 14.5L24.800 10v4L12.500 18.5L.2 14z" fill="#a41e11"/><path d="M.2 10L12.500 14.5L24.800 10v2.300L12.500 16.8L.2 12.3z" fill="#c6302b"/><path d="M.2 6L12.500 10.5L24.800 6v4L12.500 14.5L.2 10z" fill="#a41e11"/><path d="M.2 6L12.500 10.5L24.800 6v2.300L12.500 12.8L.2 8.3z" fill="#c6302b"/><path d="M12.500 1.500L24.800 6L12.500 10.500L.2 6z" fill="#d82c20"/><ellipse cx="8.300" cy="6.300" rx="2.900" ry="1.100" fill="#fff"/><path d="M11.800 3.600l3.400-.6-1.300 1.700zM12.800 7.900l3.300-1.300.6 2zM17.300 3.300l3.700 1.400-2.600 1.100z" fill="#fff"/><path d="M18.300 5.700l2.600-1 .1 2.200z" fill="#7a0c00"/></svg></div>
<div class="cell" style="left:213.500px;font-size:16.23px;letter-spacing:0.00px;">Redis</div><div class="cell" style="left:451px;font-size:16.44px;letter-spacing:0.00px;">192.168.0.3</div><div class="cell" style="left:718.500px;font-size:16.96px;letter-spacing:0.00px;">6379</div>
<div class="tag">待连接</div><div class="cell cj" style="left:1213px">等待连接测试</div>
<div class="act " style="left:1786px"><svg width="16.25" height="16.25" viewBox="64 64 896 896" fill="currentColor"><path d="M917.7 148.800l-42.400-42.400c-1.600-1.600-3.600-2.300-5.700-2.300s-4.100.8-5.700 2.300l-76.100 76.100a199.270 199.270 0 00-112.100-34.300c-51.200 0-102.400 19.500-141.500 58.600L432.300 308.700a8.030 8.030 0 000 11.300L704 591.700c1.600 1.600 3.600 2.300 5.700 2.300 2 0 4.100-.8 5.700-2.300l101.900-101.900c68.900-69 77-175.700 24.300-253.500l76.100-76.100c3.100-3.200 3.100-8.300 0-11.400zM769.100 441.700l-59.400 59.400-186.800-186.800 59.400-59.400c24.900-24.900 58.100-38.700 93.400-38.700 35.300 0 68.400 13.700 93.400 38.700 24.900 24.900 38.700 58.100 38.700 93.400 0 35.300-13.800 68.400-38.700 93.400zm-190.200 105a8.030 8.030 0 00-11.300 0L501 613.300 410.700 523l66.700-66.700c3.100-3.100 3.100-8.200 0-11.300L441 408.600a8.030 8.030 0 00-11.300 0L363 475.300l-43-43a7.850 7.850 0 00-5.700-2.300c-2 0-4.100.8-5.700 2.300L206.800 534.200c-68.900 69-77 175.700-24.300 253.500l-76.100 76.100a8.030 8.030 0 000 11.300l42.400 42.400c1.600 1.600 3.600 2.300 5.700 2.300s4.100-.8 5.700-2.300l76.100-76.100c33.700 22.900 72.900 34.300 112.100 34.300 51.200 0 102.400-19.500 141.500-58.600l101.900-101.900c3.100-3.100 3.100-8.200 0-11.300l-43-43 66.700-66.700c3.100-3.100 3.100-8.200 0-11.300l-36.600-36.200zM441.700 769.100a131.320 131.320 0 01-93.400 38.700c-35.300 0-68.400-13.700-93.400-38.700a131.320 131.320 0 01-38.700-93.400c0-35.300 13.700-68.400 38.700-93.400l59.400-59.400 186.800 186.800-59.400 59.400z"/></svg><span style="margin-left:10px">重连</span></div><div class="act " style="left:1864px"><svg width="16.25" height="16.25" viewBox="64 64 896 896" fill="currentColor"><path d="M257.7 752c2 0 4-.2 6-.5L431.900 722c2-.4 3.900-1.300 5.300-2.800l423.900-423.900a9.960 9.960 0 000-14.100L694.900 114.900c-1.900-1.900-4.400-2.900-7.100-2.900s-5.200 1-7.100 2.900L256.800 538.800c-1.500 1.500-2.400 3.300-2.800 5.300l-29.500 168.200a33.500 33.500 0 009.400 29.800c6.600 6.400 14.900 9.900 23.800 9.900zm67.400-174.400L687.800 215l73.300 73.300-362.700 362.600-88.900 15.700 15.600-89zM880 836H144c-17.700 0-32 14.300-32 32v36c0 4.400 3.600 8 8 8h784c4.400 0 8-3.600 8-8v-36c0-17.700-14.300-32-32-32z"/></svg><span style="margin-left:10px">编辑</span></div><div class="act " style="left:1941.5px"><svg width="17.5" height="17.5" viewBox="64 64 896 896" fill="currentColor"><path d="M942.2 486.2C847.4 286.500 704.100 186 512 186c-192.200 0-335.400 100.500-430.200 300.300a60.300 60.300 0 000 51.500C176.600 737.500 319.900 838 512 838c192.200 0 335.400-100.500 430.200-300.300 7.700-16.200 7.700-35 0-51.500zM512 766c-161.300 0-279.400-81.800-362.700-254C232.600 339.800 350.700 258 512 258c161.300 0 279.400 81.800 362.700 254C791.500 684.200 673.400 766 512 766zm-4-430c-97.200 0-176 78.800-176 176s78.800 176 176 176 176-78.800 176-176-78.800-176-176-176zm0 288c-61.900 0-112-50.100-112-112s50.100-112 112-112 112 50.100 112 112-50.100 112-112 112z"/></svg><span style="margin-left:10px">详情</span></div><div class="act del" style="left:2020px"><svg width="16.25" height="16.25" viewBox="64 64 896 896" fill="currentColor"><path d="M360 184h-8c4.400 0 8-3.600 8-8v8h304v-8c0 4.400 3.600 8 8 8h-8v72h72v-80c0-35.300-28.700-64-64-64H352c-35.300 0-64 28.700-64 64v80h72v-72zm504 72H160c-17.700 0-32 14.300-32 32v32c0 4.400 3.600 8 8 8h60.400l24.700 523c1.600 34.100 29.800 61 63.900 61h454c34.200 0 62.300-26.800 63.900-61l24.700-523H888c4.400 0 8-3.600 8-8v-32c0-17.700-14.300-32-32-32zM731.3 840H292.700l-24.200-512h487l-24.200 512z"/></svg><span style="margin-left:10px">删除</span></div>
</div>
<div class="row" style="top:1195px">
<div class="exp"></div><div class="chk"></div>
<div class="sico"><svg width="22.5" height="22.5" viewBox="0 0 24 24" ><rect x="0" y="0" width="24" height="24" rx="3" fill="#e1f1fd"/><path d="M6.5 4.200c1.800-.4 3.600.3 5 1.800 1.600 1.700 2.400 3.900 3.600 5.600.5.700 1.300 1.100 1.900 1.700-1-.1-1.900-.5-2.600-1.200-.2 1-.1 2 .4 2.900-1.100-.9-1.500-2.300-1.700-3.700-.3-1.800-.9-3.700-2.400-4.900-1.100-.9-2.700-1.300-4.200-2.200z" fill="none" stroke="#2a5f8f" stroke-width=".8" stroke-linejoin="round"/><text x="2.600" y="20.6" font-size="5.700" font-weight="700" fill="#3e7cad" font-family="Liberation Sans, sans-serif" letter-spacing="-.3">My<tspan fill="#f29111">SQL</tspan></text></svg></div>
<div class="cell" style="left:213.500px;font-size:16.74px;letter-spacing:0.00px;">MySQL</div><div class="cell" style="left:451px;font-size:16.44px;letter-spacing:0.00px;">192.168.0.3</div><div class="cell" style="left:718.500px;font-size:16.96px;letter-spacing:0.00px;">3306</div>
<div class="cell" style="left:874.500px;font-size:17.60px;letter-spacing:0.69px;">root</div>
<div class="tag">待连接</div><div class="cell cj" style="left:1213px">等待连接测试</div>
<div class="act " style="left:1786px"><svg width="16.25" height="16.25" viewBox="64 64 896 896" fill="currentColor"><path d="M917.7 148.800l-42.400-42.400c-1.600-1.600-3.600-2.300-5.700-2.300s-4.100.8-5.700 2.300l-76.100 76.100a199.270 199.270 0 00-112.100-34.300c-51.200 0-102.400 19.500-141.500 58.600L432.300 308.700a8.030 8.030 0 000 11.300L704 591.700c1.600 1.600 3.600 2.300 5.700 2.300 2 0 4.100-.8 5.700-2.300l101.900-101.900c68.900-69 77-175.700 24.300-253.500l76.100-76.100c3.100-3.200 3.100-8.300 0-11.400zM769.100 441.700l-59.400 59.400-186.800-186.800 59.400-59.400c24.900-24.900 58.100-38.700 93.400-38.700 35.300 0 68.400 13.700 93.400 38.700 24.900 24.900 38.700 58.100 38.700 93.400 0 35.300-13.800 68.400-38.700 93.400zm-190.200 105a8.030 8.030 0 00-11.300 0L501 613.300 410.700 523l66.700-66.700c3.100-3.100 3.100-8.200 0-11.300L441 408.600a8.030 8.030 0 00-11.300 0L363 475.300l-43-43a7.850 7.850 0 00-5.700-2.300c-2 0-4.100.8-5.700 2.300L206.800 534.200c-68.900 69-77 175.700-24.300 253.500l-76.100 76.100a8.030 8.030 0 000 11.300l42.400 42.400c1.600 1.600 3.600 2.300 5.700 2.300s4.100-.8 5.700-2.300l76.100-76.100c33.700 22.900 72.900 34.300 112.100 34.300 51.200 0 102.400-19.500 141.500-58.600l101.900-101.900c3.100-3.100 3.100-8.200 0-11.300l-43-43 66.700-66.700c3.100-3.100 3.100-8.200 0-11.300l-36.600-36.200zM441.700 769.100a131.320 131.320 0 01-93.400 38.700c-35.300 0-68.400-13.700-93.400-38.700a131.320 131.320 0 01-38.700-93.400c0-35.300 13.700-68.400 38.700-93.400l59.400-59.400 186.800 186.800-59.400 59.400z"/></svg><span style="margin-left:10px">重连</span></div><div class="act " style="left:1864px"><svg width="16.25" height="16.25" viewBox="64 64 896 896" fill="currentColor"><path d="M257.7 752c2 0 4-.2 6-.5L431.900 722c2-.4 3.900-1.300 5.300-2.800l423.900-423.900a9.960 9.960 0 000-14.100L694.900 114.900c-1.900-1.900-4.400-2.900-7.100-2.900s-5.200 1-7.100 2.900L256.800 538.800c-1.500 1.500-2.400 3.300-2.800 5.300l-29.500 168.200a33.500 33.500 0 009.400 29.800c6.600 6.400 14.900 9.900 23.800 9.900zm67.400-174.400L687.800 215l73.300 73.300-362.700 362.600-88.900 15.700 15.600-89zM880 836H144c-17.700 0-32 14.300-32 32v36c0 4.400 3.600 8 8 8h784c4.400 0 8-3.600 8-8v-36c0-17.700-14.300-32-32-32z"/></svg><span style="margin-left:10px">编辑</span></div><div class="act " style="left:1941.5px"><svg width="17.5" height="17.5" viewBox="64 64 896 896" fill="currentColor"><path d="M942.2 486.2C847.4 286.500 704.100 186 512 186c-192.200 0-335.400 100.500-430.200 300.300a60.300 60.300 0 000 51.500C176.600 737.500 319.900 838 512 838c192.200 0 335.400-100.500 430.200-300.300 7.700-16.200 7.700-35 0-51.500zM512 766c-161.300 0-279.400-81.800-362.700-254C232.600 339.800 350.700 258 512 258c161.300 0 279.400 81.800 362.700 254C791.500 684.200 673.400 766 512 766zm-4-430c-97.200 0-176 78.800-176 176s78.800 176 176 176 176-78.800 176-176-78.800-176-176-176zm0 288c-61.900 0-112-50.100-112-112s50.100-112 112-112 112 50.100 112 112-50.100 112-112 112z"/></svg><span style="margin-left:10px">详情</span></div><div class="act del" style="left:2020px"><svg width="16.25" height="16.25" viewBox="64 64 896 896" fill="currentColor"><path d="M360 184h-8c4.400 0 8-3.600 8-8v8h304v-8c0 4.400 3.600 8 8 8h-8v72h72v-80c0-35.300-28.700-64-64-64H352c-35.300 0-64 28.700-64 64v80h72v-72zm504 72H160c-17.700 0-32 14.300-32 32v32c0 4.400 3.600 8 8 8h60.400l24.700 523c1.600 34.100 29.800 61 63.900 61h454c34.200 0 62.300-26.800 63.900-61l24.700-523H888c4.400 0 8-3.600 8-8v-32c0-17.700-14.300-32-32-32zM731.3 840H292.700l-24.200-512h487l-24.200 512z"/></svg><span style="margin-left:10px">删除</span></div>
</div>
</div>
<div class="vscroll"><svg class="abs" style="left:3px;top:7px" width="12" height="10" viewBox="0 0 12 10"><path d="M6.500 .8L12.800 9H.2z" fill="#8b8b8b"/></svg><div class="abs" style="left:4px;top:505px;width:12px;height:432px;border-radius:5px;background:#8b8b8b"></div><svg class="abs" style="left:3px;top:1215px" width="12" height="10" viewBox="0 0 12 10"><path d="M6.500 9.200L.2 1h12.600z" fill="#8b8b8b"/></svg></div>
</body></html>
